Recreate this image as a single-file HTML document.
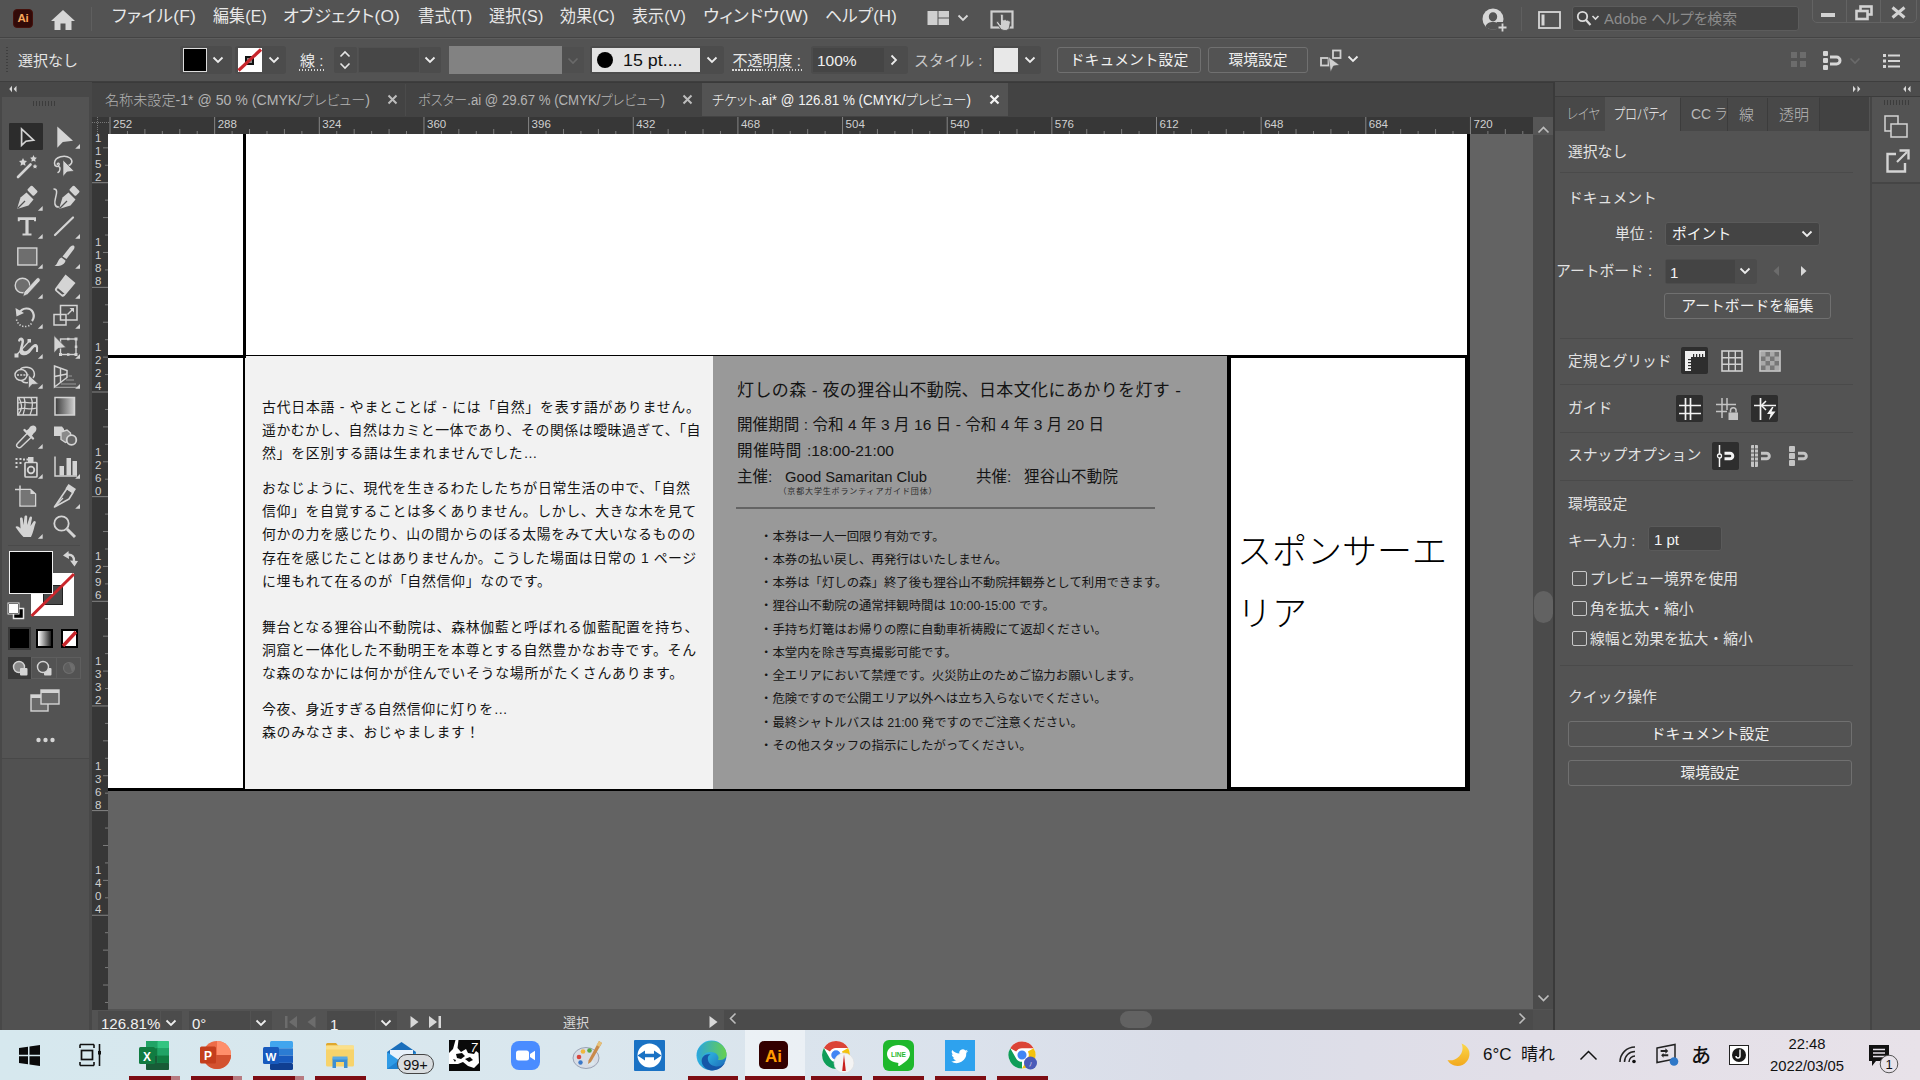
<!DOCTYPE html>
<html lang="ja">
<head>
<meta charset="utf-8">
<title>チケット.ai @ 126.81 % (CMYK/プレビュー)</title>
<style>
*{box-sizing:border-box;margin:0;padding:0}
html,body{width:1920px;height:1080px;overflow:hidden;background:#535353}
body{position:relative;font-family:"Liberation Sans","Noto Sans CJK JP",sans-serif;font-size:15px;color:#e6e6e6;line-height:1}
.p{font-feature-settings:"palt"}
.abs{position:absolute}
.ui{font-family:"Liberation Sans","Noto Sans CJK JP",sans-serif}
.t{position:absolute;white-space:nowrap}
/* bars */
#menubar{position:absolute;left:0;top:0;width:1920px;height:38px;background:#535353;border-bottom:1px solid #444}
#ctrlbar{position:absolute;left:0;top:38px;width:1920px;height:44px;background:#535353;border-top:1px solid #5d5d5d;border-bottom:1px solid #3e3e3e}
#menubar .m{font-feature-settings:"palt";position:absolute;top:7.500px;font-size:17px;color:#e8e8e8;white-space:nowrap;letter-spacing:.2px}
.dd{position:absolute;background:#484848;border-radius:2px}
.chev{position:absolute}
.btn{position:absolute;border:1px solid #707070;border-radius:3px;color:#f0f0f0;text-align:center;white-space:nowrap}
.inp{position:absolute;background:#454545;border:1px solid #4e4e4e;border-radius:2px;color:#f0f0f0}
/* tool panel */
#tools{position:absolute;left:0;top:82px;width:92px;height:948px;background:#484848}
#tools .body{position:absolute;left:2px;top:15px;width:87px;height:661px;background:#535353}
#tools .rest{position:absolute;left:2px;top:677px;width:87px;height:271px;background:#515151}
/* doc area */
#tabbar{position:absolute;left:92px;top:82px;width:1463px;height:35px;background:#434343}
.tab{font-feature-settings:"palt";position:absolute;top:0;height:34px;font-size:14px;color:#b4b4b4;white-space:nowrap;font-weight:300}
#canvas{position:absolute;left:108px;top:134px;width:1425px;height:876px;background:#636363;overflow:hidden}
#vscroll{position:absolute;left:1533px;top:117px;width:21px;height:893px;background:#4b4b4b}
#status{position:absolute;left:92px;top:1010px;width:1463px;height:20px;background:#535353}
/* right panel */
#rpanel{position:absolute;left:1555px;top:82px;width:315px;height:948px;background:#535353}
#rstrip{position:absolute;left:1870px;top:82px;width:50px;height:948px;background:#535353}
.sec{position:absolute;left:13px;font-size:14.800px;color:#e2e2e2;white-space:nowrap}
.hr1{position:absolute;left:5px;width:293px;height:1px;background:#4a4a4a}
#rpanel .sec,#rpanel .t{margin-top:1.200px}
#rpanel .t.p{margin-top:0}
/* taskbar */
#taskbar{position:absolute;left:0;top:1030px;width:1920px;height:50px;background:linear-gradient(90deg,#d6e8ee 0%,#dae7ee 30%,#dbe2ec 50%,#dadde8 62%,#e2dfe8 80%,#e8e2e9 100%);color:#111}
.run{position:absolute;top:46px;height:4px;background:#7d0d13}
.run i{position:absolute;right:0;top:0;width:9px;height:4px;background:#b77a80}
/* art */
.art{position:absolute;color:#141414;font-feature-settings:normal;font-family:"Liberation Sans","Noto Sans CJK JP",sans-serif}
.lt{width:434.500px;font-size:13.900px;line-height:23.200px}
.lt .j{white-space:nowrap;text-align:justify;text-align-last:justify;width:434.500px}
.lt .l{white-space:nowrap;letter-spacing:.5px}
.bl{font-size:12.400px;line-height:23.250px;white-space:nowrap}
</style>
</head>
<body>
<!-- ===== MENU BAR ===== -->
<div id="menubar">
  <div class="abs" style="left:13px;top:9px;width:20px;height:19px;background:#320a08;border-radius:4px;border:1px solid #45110c"></div>
  <div class="t" style="left:17.5px;top:13px;font-size:11.5px;font-weight:bold;color:#f7a75c;letter-spacing:-.2px">Ai</div>
  <svg class="abs" style="left:50px;top:9px" width="26" height="22" viewBox="0 0 26 22"><path d="M13 1 L25 12 H21.5 V21 H15.5 V14.5 H10.5 V21 H4.5 V12 H1 Z" fill="#d6d6d6"/></svg>
  <div class="abs" style="left:91px;top:7px;width:1px;height:24px;background:#5f5f5f"></div>
  <div class="m fit" style="left:111.5px;--tw:84px;transform:scaleX(1.0246);transform-origin:0 50%">ファイル(F)</div>
  <div class="m fit" style="left:212.5px;--tw:54px;transform:scaleX(0.9363);transform-origin:0 50%">編集(E)</div>
  <div class="m fit" style="left:282.5px;--tw:117px;transform:scaleX(1.0101);transform-origin:0 50%">オブジェクト(O)</div>
  <div class="m fit" style="left:418px;--tw:54.5px;transform:scaleX(0.9609);transform-origin:0 50%">書式(T)</div>
  <div class="m fit" style="left:489px;--tw:54.5px;transform:scaleX(0.9450);transform-origin:0 50%">選択(S)</div>
  <div class="m fit" style="left:559.5px;--tw:55px;transform:scaleX(0.9384);transform-origin:0 50%">効果(C)</div>
  <div class="m fit" style="left:631.5px;--tw:54px;transform:scaleX(0.9363);transform-origin:0 50%">表示(V)</div>
  <div class="m fit" style="left:703px;--tw:105.5px;transform:scaleX(1.0415);transform-origin:0 50%">ウィンドウ(W)</div>
  <div class="m fit" style="left:824.5px;--tw:72px;transform:scaleX(0.9786);transform-origin:0 50%">ヘルプ(H)</div>
  <!-- layout icon -->
  <svg class="abs" style="left:927px;top:11px" width="22" height="14" viewBox="0 0 22 14"><rect x="0.500" y="0" width="10" height="14" fill="#cfcfcf"/><rect x="11.500" y="0" width="10.500" height="6.500" fill="#cfcfcf"/><rect x="11.500" y="7.500" width="10.500" height="6.500" fill="#cfcfcf"/></svg>
  <svg class="abs" style="left:957px;top:14px" width="12" height="8" viewBox="0 0 12 8"><path d="M1.5 1.5 L6 6 L10.5 1.5" fill="none" stroke="#d8d8d8" stroke-width="1.8"/></svg>
  <!-- touch workspace icon -->
  <svg class="abs" style="left:990px;top:9px" width="24" height="23" viewBox="0 0 24 23"><rect x="1.5" y="2.5" width="21" height="16" fill="none" stroke="#cfcfcf" stroke-width="2.2"/><path d="M10.5 16 V6.5 a1.4 1.4 0 0 1 2.8 0 V11 l1.2 -.3 a1.2 1.2 0 0 1 1.5 .6 l1 -.2 a1.2 1.2 0 0 1 1.5 .7 l.6 0 a1.3 1.3 0 0 1 1.3 1.5 L19.5 18 C19 20.5 17.5 21.5 15 21.5 C12 21.5 10.5 20 9 17.5 L6.5 14 C6 13 7.5 12 8.5 13 Z" fill="#cfcfcf" stroke="#535353" stroke-width=".9"/></svg>
  <!-- user icon -->
  <svg class="abs" style="left:1482px;top:8px" width="26" height="24" viewBox="0 0 26 24"><circle cx="11" cy="11" r="10.5" fill="#d6d6d6"/><path d="M11 4.2 a4.2 4.6 0 0 1 0 9.2 a4.2 4.6 0 0 1 0 -9.2 Z M3.5 18.5 c1-3.4 4-4.6 7.5-4.6 s6.500 1.200 7.500 4.600 a10.500 10.500 0 0 1 -15 0 Z" fill="#535353"/><rect x="15" y="14" width="11" height="10" fill="#535353"/><path d="M20.5 15.500 V23.500 M16.500 19.500 H24.500" stroke="#d6d6d6" stroke-width="1.800"/></svg>
  <div class="abs" style="left:1521px;top:7px;width:1px;height:24px;background:#5f5f5f"></div>
  <svg class="abs" style="left:1538px;top:11px" width="23" height="18" viewBox="0 0 23 18"><rect x="1" y="1" width="21" height="16" fill="none" stroke="#d6d6d6" stroke-width="1.800"/><rect x="3.500" y="3.500" width="3" height="11" fill="#d6d6d6"/></svg>
  <!-- search -->
  <div class="abs" style="left:1572px;top:6px;width:227px;height:25px;background:#444;border:1px solid #5c5c5c;border-radius:3px"></div>
  <svg class="abs" style="left:1576px;top:10px" width="30" height="18" viewBox="0 0 30 18"><circle cx="6.500" cy="6.500" r="4.700" fill="none" stroke="#dcdcdc" stroke-width="1.800"/><path d="M10 10 L14.500 15" stroke="#dcdcdc" stroke-width="2.200"/><path d="M16.500 6 L19.500 9 L22.500 6" fill="none" stroke="#dcdcdc" stroke-width="1.600"/></svg>
  <div class="t p fit" style="left:1604px;top:11px;font-size:15px;color:#8c8c8c;--tw:133px;transform:scaleX(0.9893);transform-origin:0 50%">Adobe ヘルプを検索</div>
  <!-- window controls -->
  <div class="abs" style="left:1812px;top:-2px;width:105px;height:25px;border:1px solid #636363;border-radius:0 0 5px 5px"></div>
  <div class="abs" style="left:1846px;top:0;width:1px;height:22px;background:#636363"></div>
  <div class="abs" style="left:1880px;top:0;width:1px;height:22px;background:#636363"></div>
  <div class="abs" style="left:1821px;top:13px;width:14px;height:4px;background:#d2d2d2"></div>
  <svg class="abs" style="left:1855px;top:5px" width="19" height="16" viewBox="0 0 19 16"><rect x="5.500" y="1.500" width="11" height="8" fill="none" stroke="#d2d2d2" stroke-width="2.600"/><rect x="1.500" y="6" width="11" height="8" fill="#535353" stroke="#d2d2d2" stroke-width="2.600"/></svg>
  <svg class="abs" style="left:1891px;top:6px" width="15" height="13" viewBox="0 0 15 13"><path d="M1.500 1.500 L13.500 11.500 M13.500 1.500 L1.500 11.500" stroke="#d2d2d2" stroke-width="3"/></svg>
</div>
<!-- ===== CONTROL BAR ===== -->
<div id="ctrlbar"></div>
<div id="ctrl" class="abs" style="left:0;top:0;width:1920px;height:0">
  <!-- grip -->
  <div class="abs" style="left:6px;top:47px;width:2px;height:26px;background:repeating-linear-gradient(180deg,#3f3f3f 0 1px,transparent 1px 3px)"></div>
  <div class="t" style="left:18px;top:52.500px;font-size:15px;color:#e4e4e4">選択なし</div>
  <!-- fill swatch -->
  <div class="abs" style="left:180px;top:46px;width:52px;height:28px;background:#4c4c4c;border-radius:3px"></div>
  <div class="abs" style="left:183px;top:48px;width:24px;height:24px;background:#000;border:1px solid #dcdcdc"></div>
  <svg class="chev" style="left:212px;top:56px" width="12" height="8" viewBox="0 0 12 8"><path d="M1.500 1.500 L6 6 L10.500 1.500" fill="none" stroke="#ececec" stroke-width="1.800"/></svg>
  <!-- stroke swatch -->
  <div class="abs" style="left:235px;top:46px;width:51px;height:28px;background:#4c4c4c;border-radius:3px"></div>
  <div class="abs" style="left:238px;top:48px;width:24px;height:24px;background:#fff"></div>
  <div class="abs" style="left:245px;top:56px;width:9px;height:9px;border:2px solid #111;background:#888"></div>
  <svg class="abs" style="left:236px;top:47px" width="28" height="26" viewBox="0 0 28 26"><path d="M2.500 23.500 L25 2.500" stroke="#c8262c" stroke-width="3.2"/></svg>
  <svg class="chev" style="left:268px;top:56px" width="12" height="8" viewBox="0 0 12 8"><path d="M1.500 1.500 L6 6 L10.500 1.500" fill="none" stroke="#ececec" stroke-width="1.800"/></svg>
  <!-- stroke label -->
  <div class="t" style="left:300px;top:52.500px;font-size:15px;color:#e8e8e8">線 :</div>
  <div class="abs" style="left:299px;top:69px;width:27px;height:2px;background:repeating-linear-gradient(90deg,#d8d8d8 0 1.500px,transparent 1.500px 3px)"></div>
  <!-- spinner -->
  <div class="abs" style="left:334px;top:47px;width:23px;height:26px;background:#4c4c4c;border-radius:2px"></div>
  <svg class="abs" style="left:339px;top:50px" width="12" height="20" viewBox="0 0 12 20"><path d="M1.500 6.500 L6 2 L10.500 6.500 M1.500 13.500 L6 18 L10.500 13.500" fill="none" stroke="#e6e6e6" stroke-width="1.600"/></svg>
  <div class="abs" style="left:358px;top:47px;width:62px;height:26px;background:#474747;border:1px solid #505050"></div>
  <div class="abs" style="left:420px;top:47px;width:21px;height:26px;background:#4c4c4c;border-radius:0 2px 2px 0"></div>
  <svg class="chev" style="left:424px;top:56px" width="12" height="8" viewBox="0 0 12 8"><path d="M1.500 1.500 L6 6 L10.500 1.500" fill="none" stroke="#ececec" stroke-width="1.800"/></svg>
  <!-- profile -->
  <div class="abs" style="left:449px;top:46px;width:113px;height:28px;background:#828282"></div>
  <div class="abs" style="left:562px;top:47px;width:22px;height:26px;background:#4f4f4f"></div>
  <svg class="chev" style="left:567px;top:57px" width="12" height="8" viewBox="0 0 12 8"><path d="M1.500 1.500 L6 6 L10.500 1.500" fill="none" stroke="#6a6a6a" stroke-width="1.600"/></svg>
  <!-- brush -->
  <div class="abs" style="left:590px;top:46px;width:134px;height:28px;background:#4c4c4c;border-radius:3px"></div>
  <div class="abs" style="left:592px;top:48px;width:108px;height:24px;background:#e2e2e2"></div>
  <div class="abs" style="left:597px;top:52px;width:16px;height:16px;border-radius:50%;background:#000"></div>
  <div class="t fit" style="left:623px;top:52px;font-size:17px;color:#111;--tw:59.500px;transform:scaleX(1.0493);transform-origin:0 50%">15 pt....</div>
  <svg class="chev" style="left:706px;top:56px" width="12" height="8" viewBox="0 0 12 8"><path d="M1.500 1.500 L6 6 L10.500 1.500" fill="none" stroke="#ececec" stroke-width="1.800"/></svg>
  <!-- opacity -->
  <div class="t" style="left:732.500px;top:52.500px;font-size:15px;color:#e8e8e8">不透明度 :</div>
  <div class="abs" style="left:732px;top:69px;width:72px;height:2px;background:repeating-linear-gradient(90deg,#d8d8d8 0 1.500px,transparent 1.500px 3px)"></div>
  <div class="abs" style="left:811px;top:46px;width:97px;height:28px;background:#4c4c4c;border-radius:3px"></div>
  <div class="abs" style="left:813px;top:48px;width:71px;height:24px;background:#454545"></div>
  <div class="t" style="left:817px;top:53px;font-size:15.500px;color:#f0f0f0">100%</div>
  <svg class="abs" style="left:890px;top:54px" width="8" height="12" viewBox="0 0 8 12"><path d="M1.500 1.500 L6 6 L1.500 10.500" fill="none" stroke="#ececec" stroke-width="1.800"/></svg>
  <!-- style -->
  <div class="t" style="left:914px;top:52.500px;font-size:15px;color:#c8c8c8">スタイル :</div>
  <div class="abs" style="left:992px;top:46px;width:49px;height:28px;background:#4c4c4c;border-radius:3px"></div>
  <div class="abs" style="left:994px;top:48px;width:24px;height:24px;background:#e8e8e8"></div>
  <svg class="chev" style="left:1024px;top:56px" width="12" height="8" viewBox="0 0 12 8"><path d="M1.500 1.500 L6 6 L10.500 1.500" fill="none" stroke="#ececec" stroke-width="1.800"/></svg>
  <!-- buttons -->
  <div class="btn" style="left:1057px;top:47px;width:144px;height:26px;font-size:14.800px;line-height:25px">ドキュメント設定</div>
  <div class="btn" style="left:1208px;top:47px;width:100px;height:26px;font-size:14.800px;line-height:25px">環境設定</div>
  <!-- select similar icon -->
  <svg class="abs" style="left:1319px;top:49px" width="26" height="24" viewBox="0 0 26 24"><rect x="2" y="9" width="7.500" height="7.500" fill="none" stroke="#d0d0d0" stroke-width="1.800"/><rect x="14" y="1.500" width="7.500" height="7.500" fill="none" stroke="#d0d0d0" stroke-width="1.800"/><path d="M9.500 8 L20.500 16 L14.500 17 L11.500 23 Z" fill="#d0d0d0" stroke="#535353" stroke-width=".6"/></svg>
  <svg class="chev" style="left:1347px;top:55px" width="12" height="8" viewBox="0 0 12 8"><path d="M1.500 1.500 L6 6 L10.500 1.500" fill="none" stroke="#ececec" stroke-width="1.800"/></svg>
  <!-- right icons -->
  <svg class="abs" style="left:1791px;top:52px" width="16" height="16" viewBox="0 0 16 16"><g fill="#6c6c6c"><rect x="0" y="0" width="6" height="6"/><rect x="9" y="0" width="6" height="6"/><rect x="0" y="9" width="6" height="6"/><rect x="9" y="9" width="6" height="6"/></g></svg>
  <svg class="abs" style="left:1822px;top:50px" width="24" height="21" viewBox="0 0 24 21"><g fill="#d6d6d6"><rect x="1" y="1" width="5" height="5" rx="1"/><rect x="1" y="8" width="5" height="5" rx="1"/><rect x="1" y="15" width="5" height="5" rx="1"/></g><path d="M8 7 H14.500 a3.500 3.500 0 0 1 0 7 H8" fill="none" stroke="#d6d6d6" stroke-width="3"/></svg>
  <svg class="chev" style="left:1849px;top:57px" width="12" height="8" viewBox="0 0 12 8"><path d="M1.500 1.500 L6 6 L10.500 1.500" fill="none" stroke="#6a6a6a" stroke-width="1.600"/></svg>
  <svg class="abs" style="left:1883px;top:54px" width="17" height="14" viewBox="0 0 17 14"><g fill="#d6d6d6"><rect x="0" y="0" width="3" height="3"/><rect x="0" y="5.500" width="3" height="3"/><rect x="0" y="11" width="3" height="3"/><rect x="5" y="0.500" width="12" height="2"/><rect x="5" y="6" width="12" height="2"/><rect x="5" y="11.500" width="12" height="2"/></g></svg>
</div>
<!-- ===== TOOLS ===== -->
<div id="tools"><div class="body"></div><div class="rest"></div></div>
<div id="toolicons" class="abs" style="left:0;top:0;width:0;height:0">
<svg class="abs" style="left:8px;top:85px" width="10" height="8" viewBox="0 0 10 8"><path d="M4 .8 L1.200 4 L4 7.200 Z M8.500 .8 L5.700 4 L8.500 7.200 Z" fill="#d8d8d8"/></svg>
<div class="abs" style="left:33px;top:101px;width:24px;height:5px;background:repeating-linear-gradient(90deg,#3c3c3c 0 1px,transparent 1px 3px)"></div>
<div class="abs" style="left:9px;top:123px;width:34px;height:27px;background:#2c2c2c;border-radius:1px"></div>
<svg class="abs" style="left:12px;top:122px;overflow:visible" width="30" height="30" viewBox="0 0 30 30"><path d="M9.600 7 L9.600 23.300 L14 19.200 L21.600 18.200 Z" fill="none" stroke="#d4d4d4" stroke-width="1.700" stroke-linejoin="miter"/></svg>
<svg class="abs" style="left:50px;top:122px;overflow:visible" width="30" height="30" viewBox="0 0 30 30"><path d="M7.300 4.400 L7.300 25.800 L12.800 20 L23 18.800 Z" fill="#d4d4d4"/><path d="M30 22 V26.800 H25.2 Z" fill="#d4d4d4"/></svg>
<svg class="abs" style="left:12px;top:152px;overflow:visible" width="30" height="30" viewBox="0 0 30 30"><path d="M6 25 L18.500 12.500" stroke="#d4d4d4" stroke-width="2.600" stroke-linecap="round"/><path d="M11 5 l1.200 2.600 2.800 .4 -2 2 .5 2.800 -2.500 -1.300 -2.500 1.300 .5 -2.800 -2 -2 2.800 -.4z" fill="#d4d4d4" transform="translate(0,1)"/><path d="M21.500 3 l1 2.300 2.400 .4 -1.700 1.700 .4 2.400 -2.100 -1.100 -2.100 1.100 .4 -2.400 -1.700 -1.700 2.400 -.4z" fill="#d4d4d4"/><path d="M23 12 l.8 1.500 1.600 .3 -1.200 1.100 .3 1.600 -1.500 -.8 -1.500 .8 .3 -1.600 -1.200 -1.100 1.600 -.3z" fill="#d4d4d4"/></svg>
<svg class="abs" style="left:50px;top:152px;overflow:visible" width="30" height="30" viewBox="0 0 30 30"><path d="M17 14 C22 13 23.500 9 20 6 C15 2.500 5 4.500 4.500 11 C4.300 14.500 8 15.500 9 13 C9.800 11 7.500 10.500 7.300 12.300 M8.500 14.500 C11 15 10 19.500 8 20.500" fill="none" stroke="#d4d4d4" stroke-width="1.500" stroke-linecap="round"/><path d="M13 8 L13 24.500 L17 20 L24 19 Z" fill="#d4d4d4" stroke="#535353" stroke-width=".6"/></svg>
<svg class="abs" style="left:12px;top:183.5px;overflow:visible" width="30" height="30" viewBox="0 0 30 30"><path d="M5 25 L8.500 13.500 L14.500 8.500 L21.500 15.500 L16.500 21.500 Z" fill="#d4d4d4"/><path d="M5.500 24.500 L13 17" stroke="#535353" stroke-width="1.200"/><rect x="16" y="3.500" width="9" height="6.500" rx="1.200" transform="rotate(45 20.500 6.750)" fill="#d4d4d4"/><path d="M30.7 22 V26.800 H25.9 Z" fill="#d4d4d4"/></svg>
<svg class="abs" style="left:50px;top:183.5px;overflow:visible" width="30" height="30" viewBox="0 0 30 30"><g transform="translate(4,0)"><path d="M5 25 L8.500 13.500 L14.500 8.500 L21.500 15.500 L16.500 21.500 Z" fill="#d4d4d4"/><path d="M5.500 24.500 L13 17" stroke="#535353" stroke-width="1.200"/><rect x="16" y="3.500" width="9" height="6.500" rx="1.200" transform="rotate(45 20.500 6.750)" fill="#d4d4d4"/></g><path d="M4 5 C8 5 6.500 10 5.500 14 C4.500 18 4 23 8.500 23" fill="none" stroke="#d4d4d4" stroke-width="1.500" stroke-linecap="round"/></svg>
<svg class="abs" style="left:12px;top:212px;overflow:visible" width="30" height="30" viewBox="0 0 30 30"><path d="M5.800 5.300 H24 V9.300 H22 V8 H16.600 V21.500 H19.500 V23.500 H10.500 V21.500 H13.400 V8 H7.800 V9.300 H5.800 Z" fill="#d4d4d4"/><path d="M30.7 22 V26.800 H25.9 Z" fill="#d4d4d4"/></svg>
<svg class="abs" style="left:50px;top:212px;overflow:visible" width="30" height="30" viewBox="0 0 30 30"><path d="M5 23 L23 5.500" stroke="#d4d4d4" stroke-width="2.200" stroke-linecap="round"/><path d="M30 22 V26.800 H25.2 Z" fill="#d4d4d4"/></svg>
<svg class="abs" style="left:12px;top:242px;overflow:visible" width="30" height="30" viewBox="0 0 30 30"><rect x="5.800" y="6" width="19" height="17" fill="#6e6e6e" stroke="#d4d4d4" stroke-width="1.400"/><path d="M30.7 22 V26.800 H25.9 Z" fill="#d4d4d4"/></svg>
<svg class="abs" style="left:50px;top:242px;overflow:visible" width="30" height="30" viewBox="0 0 30 30"><path d="M22.500 3.500 C24.500 3 25 5 24 7 L16.500 17 L12.500 14.500 L20 5 C21 4 21.500 3.800 22.500 3.500 Z" fill="#d4d4d4"/><path d="M11.500 15.500 L15.500 18.500 C15 22 11 24.500 4.500 24 C8 22.500 7.500 17 11.500 15.500 Z" fill="#d4d4d4"/><path d="M30 22 V26.800 H25.2 Z" fill="#d4d4d4"/></svg>
<svg class="abs" style="left:12px;top:272px;overflow:visible" width="30" height="30" viewBox="0 0 30 30"><circle cx="10.500" cy="13.500" r="7.300" fill="#6e6e6e" stroke="#d4d4d4" stroke-width="1.400"/><path d="M27 6 C28.500 7 28.500 8.500 27.500 9.500 L15.500 22.500 L11 24.500 L12 20 L24.500 6.500 C25.300 5.600 26.200 5.500 27 6 Z" fill="#d4d4d4" stroke="#535353" stroke-width=".7"/><path d="M30.7 22 V26.800 H25.9 Z" fill="#d4d4d4"/></svg>
<svg class="abs" style="left:50px;top:272px;overflow:visible" width="30" height="30" viewBox="0 0 30 30"><path d="M15.500 2.500 L25.500 11 L14.500 24 C13.500 25 12.500 25 11.500 24.200 L5.500 19 C4.700 18 4.700 17 5.500 16 Z" fill="#d4d4d4"/><path d="M7.300 16.600 L14 22.300 L11.700 23 L6.300 18.400 Z" fill="#535353" transform="translate(0.500,-0.500)"/><path d="M30 22 V26.800 H25.2 Z" fill="#d4d4d4"/></svg>
<svg class="abs" style="left:12px;top:302px;overflow:visible" width="30" height="30" viewBox="0 0 30 30"><path d="M7 11.500 C10 5 18.500 5 21 10.500 C22.500 14 21.500 17 20 19" fill="none" stroke="#d4d4d4" stroke-width="2.200"/><path d="M3.500 6 L4.500 14.500 L12 11 Z" fill="#d4d4d4"/><path d="M4.500 17.500 C6 23 10 25 14.500 24.500 C17.500 24 19 22.500 20 20.500" fill="none" stroke="#d4d4d4" stroke-width="1.600" stroke-dasharray="1.300 1.700"/><path d="M30.7 22 V26.800 H25.9 Z" fill="#d4d4d4"/></svg>
<svg class="abs" style="left:50px;top:302px;overflow:visible" width="30" height="30" viewBox="0 0 30 30"><rect x="10.500" y="3.500" width="16.500" height="14.500" fill="none" stroke="#d4d4d4" stroke-width="1.500"/><rect x="4" y="12.500" width="12" height="10.500" fill="none" stroke="#d4d4d4" stroke-width="1.500"/><path d="M17.500 12.500 L23 7" stroke="#d4d4d4" stroke-width="1.500"/><path d="M19.500 6 H24 V10.500 Z" fill="#d4d4d4"/><path d="M30 22 V26.800 H25.2 Z" fill="#d4d4d4"/></svg>
<svg class="abs" style="left:12px;top:332px;overflow:visible" width="30" height="30" viewBox="0 0 30 30"><path d="M6 9 C7 4 12 5 12 9 C12 13 9 17 12 19 C16 21 20 11 24 12 C27 13 26 17 26 20 L24 20 C24 17 24.500 15 23 15 C20 16 18 25 10 23 C5 21.500 9 14 9.500 10 C9.700 8 8 8 7.500 10 Z" fill="#d4d4d4"/><path d="M4 23.500 L17 9.500" stroke="#d4d4d4" stroke-width="1.200"/><rect x="2.500" y="21.500" width="4" height="4" fill="#d4d4d4"/><rect x="15.500" y="7" width="3.500" height="3.500" fill="#d4d4d4"/><path d="M30.7 22 V26.800 H25.9 Z" fill="#d4d4d4"/></svg>
<svg class="abs" style="left:50px;top:332px;overflow:visible" width="30" height="30" viewBox="0 0 30 30"><rect x="10.500" y="7" width="15.500" height="15.500" fill="none" stroke="#d4d4d4" stroke-width="1.400"/><g fill="#d4d4d4"><rect x="24.500" y="5.500" width="3" height="3"/><rect x="24.500" y="21" width="3" height="3"/><rect x="9" y="21" width="3" height="3"/><rect x="17" y="5.800" width="2.500" height="2.500"/><rect x="17" y="21.300" width="2.500" height="2.500"/><rect x="24.800" y="13.500" width="2.500" height="2.500"/></g><path d="M4 3.500 L4 21 L8 16.500 L16 15.500 Z" fill="#d4d4d4" stroke="#535353" stroke-width=".7"/><path d="M30 22 V26.800 H25.2 Z" fill="#d4d4d4"/></svg>
<svg class="abs" style="left:12px;top:362px;overflow:visible" width="30" height="30" viewBox="0 0 30 30"><ellipse cx="9" cy="13" rx="6" ry="5.500" fill="none" stroke="#d4d4d4" stroke-width="1.400"/><path d="M8 8 C10 4 20 4 22 10 C23 13 22 15 21 16 M9.500 18.500 C11 20.500 14 21 16 20.500" fill="none" stroke="#d4d4d4" stroke-width="1.400"/><path d="M5 13 H17" stroke="#d4d4d4" stroke-width="1.400" stroke-dasharray="2 1.200"/><path d="M16.500 13 L16.500 26.500 L20 22.500 L26.500 22 Z" fill="#d4d4d4" stroke="#535353" stroke-width=".6"/><path d="M30.7 22 V26.800 H25.9 Z" fill="#d4d4d4"/></svg>
<svg class="abs" style="left:50px;top:362px;overflow:visible" width="30" height="30" viewBox="0 0 30 30"><path d="M4.500 4 L17 8.500 V15.500 L4.500 25 Z" fill="none" stroke="#d4d4d4" stroke-width="1.500"/><path d="M4.500 14.500 L17 12 M10.500 6 V20.500" stroke="#d4d4d4" stroke-width="1.400"/><path d="M18.500 14 H22 M16 18 H24 M11 22 H26 M5 25.300 H27.500" stroke="#9a9a9a" stroke-width="1.200"/><path d="M30 22 V26.800 H25.2 Z" fill="#d4d4d4"/></svg>
<svg class="abs" style="left:12px;top:392px;overflow:visible" width="30" height="30" viewBox="0 0 30 30"><rect x="5.800" y="5.500" width="19" height="17.500" fill="none" stroke="#d4d4d4" stroke-width="1.500"/><path d="M6 11 C12 9 18 12 24.500 10.500 M6 17.500 C12 14.500 17 18.500 24.500 16 M12 5.500 C14 11 13 17 11 23 M19 5.500 C21.500 11 20.500 17 18 23 M6 23 C10 18 11 14 7 6" fill="none" stroke="#d4d4d4" stroke-width="1.300"/></svg>
<svg class="abs" style="left:50px;top:392px;overflow:visible" width="30" height="30" viewBox="0 0 30 30"><defs><linearGradient id="gt" x1="0" x2="1"><stop offset="0" stop-color="#3a3a3a"/><stop offset="1" stop-color="#cfcfcf"/></linearGradient></defs><rect x="5" y="5.500" width="19.500" height="17.500" fill="url(#gt)" stroke="#d4d4d4" stroke-width="1.500"/></svg>
<svg class="abs" style="left:12px;top:422px;overflow:visible" width="30" height="30" viewBox="0 0 30 30"><path d="M5.500 25 C4 24 4.500 22.500 5.500 21.500 L15.500 11 L19.500 15 L9 25 C8 26 6.500 26 5.500 25 Z" fill="none" stroke="#d4d4d4" stroke-width="1.500"/><path d="M14 9 L17 6.500 C18 4 21.500 2.500 23.500 4.500 C25.500 6.500 24 10 21.500 11.500 L19.500 14.500 Z" fill="#d4d4d4"/><path d="M12.500 8 L21 16.500" stroke="#d4d4d4" stroke-width="2.400" stroke-linecap="round"/><path d="M30.7 22 V26.800 H25.9 Z" fill="#d4d4d4"/></svg>
<svg class="abs" style="left:50px;top:422px;overflow:visible" width="30" height="30" viewBox="0 0 30 30"><path d="M4 4.500 H12 L14 7 V14 H4 Z" fill="#d4d4d4"/><path d="M11 10 L17 8 L20.500 11 V18.500 L15.500 20.500 L11 17.500 Z" fill="#8a8a8a" stroke="#d4d4d4" stroke-width="1.400"/><circle cx="21.500" cy="18" r="4.800" fill="#666" stroke="#d4d4d4" stroke-width="1.800"/></svg>
<svg class="abs" style="left:12px;top:452px;overflow:visible" width="30" height="30" viewBox="0 0 30 30"><rect x="13" y="10.500" width="12" height="14.500" rx="1" fill="none" stroke="#d4d4d4" stroke-width="1.700"/><rect x="16" y="5" width="5.500" height="5" fill="#d4d4d4"/><rect x="14.500" y="6.500" width="3" height="2" fill="#d4d4d4"/><circle cx="19" cy="18" r="3.300" fill="none" stroke="#d4d4d4" stroke-width="1.800"/><g fill="#d4d4d4"><rect x="3.500" y="6" width="2" height="2"/><rect x="7.500" y="6" width="2" height="2"/><rect x="11" y="6.500" width="2" height="2"/><rect x="3.500" y="10" width="2" height="2"/><rect x="7.500" y="10" width="2" height="2"/><rect x="3.500" y="14" width="2" height="2"/></g><path d="M30.7 22 V26.800 H25.9 Z" fill="#d4d4d4"/></svg>
<svg class="abs" style="left:50px;top:452px;overflow:visible" width="30" height="30" viewBox="0 0 30 30"><path d="M5 4.500 V24 H27" fill="none" stroke="#d4d4d4" stroke-width="1.500"/><rect x="9.500" y="14" width="4.500" height="9.500" fill="#d4d4d4"/><rect x="16.500" y="6" width="4.500" height="17.500" fill="#d4d4d4"/><rect x="22.500" y="9" width="4.500" height="14.500" fill="#d4d4d4"/><path d="M30 22 V26.800 H25.2 Z" fill="#d4d4d4"/></svg>
<svg class="abs" style="left:12px;top:482px;overflow:visible" width="30" height="30" viewBox="0 0 30 30"><path d="M8 3.500 V24 H23.500 V12 L18.500 7.500 H3" fill="none" stroke="#d4d4d4" stroke-width="1.500"/><path d="M8.800 8.300 H18 L22.800 12.500 V23.200 H8.800 Z" fill="#757575"/><path d="M18.500 7.500 V12 H23.500 Z" fill="#d4d4d4"/></svg>
<svg class="abs" style="left:50px;top:482px;overflow:visible" width="30" height="30" viewBox="0 0 30 30"><path d="M4.500 25 L17 6.500 L23 10.500 L19 17 Z" fill="none" stroke="#d4d4d4" stroke-width="1.600" stroke-linejoin="round"/><path d="M5 24.500 L13 16" stroke="#d4d4d4" stroke-width="1.200"/><path d="M18.500 2 L26 7 L23 11.500 L15.500 6.500 Z" fill="#d4d4d4"/><path d="M30 22 V26.800 H25.2 Z" fill="#d4d4d4"/></svg>
<svg class="abs" style="left:12px;top:512px;overflow:visible" width="30" height="30" viewBox="0 0 30 30"><path d="M11.500 25 C8 22 6 18 3.500 15 C4.500 13.500 6.500 14 8.500 16.500 L8 6.500 C8 5 10.500 5 10.700 6.500 L11.500 13 L12.500 4.500 C12.700 3 15.200 3 15.200 4.500 L15 13 L17.500 5.500 C18 4 20.300 4.500 20 6 L18.500 14 L21.500 9.500 C22.300 8.300 24.300 9.300 23.700 10.700 C22 15 21.500 20 19 25 Z" fill="#d4d4d4"/><path d="M30.7 22 V26.800 H25.9 Z" fill="#d4d4d4"/></svg>
<svg class="abs" style="left:50px;top:512px;overflow:visible" width="30" height="30" viewBox="0 0 30 30"><circle cx="11.500" cy="11.500" r="7.200" fill="none" stroke="#d4d4d4" stroke-width="1.800"/><path d="M17 17 L25 25" stroke="#d4d4d4" stroke-width="3" stroke-linecap="butt"/></svg>
<div class="abs" style="left:8px;top:545px;width:72px;height:1px;background:#4a4a4a"></div>
<div class="abs" style="left:31px;top:573px;width:43px;height:43px;background:#fff"></div>
<div class="abs" style="left:43px;top:585px;width:20px;height:20px;background:#4a4a4a;border:1.500px solid #222"></div>
<svg class="abs" style="left:29px;top:571px" width="48" height="48" viewBox="0 0 48 48"><path d="M2.500 45 L45 3" stroke="#c9252b" stroke-width="3"/></svg>
<div class="abs" style="left:9px;top:551px;width:44px;height:43px;background:#000;border:1.500px solid #f0f0f0"></div>
<svg class="abs" style="left:61px;top:550px" width="20" height="18" viewBox="0 0 20 18"><path d="M6 5 C11 4 13.500 7 13 11.500" fill="none" stroke="#d4d4d4" stroke-width="2.400"/><path d="M7.500 1 L2 5.500 L8 9 Z M9 10.500 L17 11 L13.500 16.500 Z" fill="#d4d4d4"/></svg>
<svg class="abs" style="left:7px;top:602px" width="18" height="18" viewBox="0 0 18 18"><rect x="6.500" y="6.500" width="10" height="10" fill="#000" stroke="#e8e8e8" stroke-width="1.500"/><rect x="1.500" y="1.500" width="10" height="10" fill="#fff" stroke="#000" stroke-width="1"/><rect x="1" y="1" width="11" height="11" fill="none" stroke="#e8e8e8" stroke-width="1"/></svg>
<div class="abs" style="left:8px;top:627px;width:23px;height:23px;background:#3a3a3a"></div>
<div class="abs" style="left:10px;top:629px;width:19px;height:19px;background:#000"></div>
<div class="abs" style="left:36px;top:629px;width:17px;height:19px;background:linear-gradient(90deg,#fff,#222);border:2px solid #000;box-sizing:content-box;width:13px;height:15px"></div>
<div class="abs" style="left:61px;top:629px;width:13px;height:15px;background:#fff;border:2px solid #000;box-sizing:content-box"></div>
<svg class="abs" style="left:61px;top:629px" width="17" height="19" viewBox="0 0 17 19"><path d="M2 17 L15 3" stroke="#c9252b" stroke-width="3.400"/></svg>
<div class="abs" style="left:8px;top:657px;width:73px;height:22px;border:1px solid #5e5e5e"></div>
<div class="abs" style="left:8px;top:657px;width:23px;height:22px;background:#3a3a3a"></div>
<div class="abs" style="left:31px;top:657px;width:1px;height:22px;background:#5e5e5e"></div><div class="abs" style="left:56px;top:657px;width:1px;height:22px;background:#5e5e5e"></div>
<svg class="abs" style="left:12px;top:660px" width="18" height="18" viewBox="0 0 18 18"><circle cx="7" cy="7" r="5.500" fill="#8a8a8a" stroke="#d4d4d4" stroke-width="1.400"/><rect x="8" y="8" width="7.500" height="7.500" rx="1" fill="#d4d4d4"/></svg>
<svg class="abs" style="left:36px;top:660px" width="18" height="18" viewBox="0 0 18 18"><rect x="8" y="8" width="7.500" height="7.500" rx="1" fill="#d4d4d4"/><circle cx="7" cy="7" r="5.500" fill="#535353" stroke="#d4d4d4" stroke-width="1.400"/></svg>
<svg class="abs" style="left:61px;top:660px" width="18" height="18" viewBox="0 0 18 18"><circle cx="8" cy="8" r="5.500" fill="#5e5e5e" stroke="#6e6e6e" stroke-width="1.200"/><path d="M8 3 a5 5 0 0 1 3 9 Z" fill="#6e6e6e"/></svg>
<svg class="abs" style="left:30px;top:689px" width="30" height="23" viewBox="0 0 30 23"><rect x="1" y="6" width="17" height="16" fill="#6a6a6a" stroke="#d4d4d4" stroke-width="1.400"/><rect x="1" y="6" width="17" height="3" fill="#d4d4d4"/><rect x="11" y="1" width="18" height="14" fill="#6a6a6a" stroke="#d4d4d4" stroke-width="1.400"/><rect x="11" y="1" width="18" height="3" fill="#d4d4d4"/></svg>
<svg class="abs" style="left:36px;top:737px" width="19" height="6" viewBox="0 0 19 6"><circle cx="2.500" cy="3" r="2.200" fill="#d4d4d4"/><circle cx="9.500" cy="3" r="2.200" fill="#d4d4d4"/><circle cx="16.500" cy="3" r="2.200" fill="#d4d4d4"/></svg>
</div>
<!-- ===== DOCUMENT AREA ===== -->
<div id="tabbar">
  <div class="abs" style="left:0;top:0;width:1463px;height:1px;background:#3a3a3a"></div>
  <div class="tab" style="left:13px;width:300px"><span class="t fit" style="left:0;top:11px;--tw:265px;transform:scaleX(1.0075);transform-origin:0 50%">名称未設定-1* @ 50 % (CMYK/プレビュー)</span></div>
  <div class="abs" style="left:313px;top:2px;width:1px;height:32px;background:#4b4b4b"></div>
  <div class="tab" style="left:326px;width:280px"><span class="t fit" style="left:0;top:11px;--tw:247px;transform:scaleX(0.9446);transform-origin:0 50%">ポスター.ai @ 29.67 % (CMYK/プレビュー)</span></div>
  <div class="abs" style="left:610px;top:1px;width:306px;height:33px;background:#535353"></div>
  <div class="tab" style="left:620px;width:290px;color:#f2f2f2"><span class="t fit" style="left:0;top:11px;--tw:259px;transform:scaleX(0.9582);transform-origin:0 50%">チケット.ai* @ 126.81 % (CMYK/プレビュー)</span></div>
  <svg class="abs" style="left:295px;top:12px" width="11" height="11" viewBox="0 0 11 11"><path d="M1.500 1.500 L9.500 9.500 M9.500 1.500 L1.500 9.500" stroke="#bdbdbd" stroke-width="2"/></svg>
  <svg class="abs" style="left:590px;top:12px" width="11" height="11" viewBox="0 0 11 11"><path d="M1.500 1.500 L9.500 9.500 M9.500 1.500 L1.500 9.500" stroke="#bdbdbd" stroke-width="2"/></svg>
  <svg class="abs" style="left:897px;top:12px" width="11" height="11" viewBox="0 0 11 11"><path d="M1.500 1.500 L9.500 9.500 M9.500 1.500 L1.500 9.500" stroke="#f4f4f4" stroke-width="2.200"/></svg>
</div>
<svg class="hr" width="1441" height="17" viewBox="0 0 1441 17" style="position:absolute;left:92px;top:117px">
<rect width="1441" height="17" fill="#373737"/>
<rect x="17.50" y="0" width="1" height="17" fill="#858585"/>
<rect x="34.94" y="14" width="1" height="3" fill="#7c7c7c"/>
<rect x="52.38" y="12" width="1" height="5" fill="#7c7c7c"/>
<rect x="69.83" y="14" width="1" height="3" fill="#7c7c7c"/>
<rect x="87.27" y="12" width="1" height="5" fill="#7c7c7c"/>
<rect x="104.71" y="14" width="1" height="3" fill="#7c7c7c"/>
<rect x="122.15" y="0" width="1" height="17" fill="#858585"/>
<rect x="139.59" y="14" width="1" height="3" fill="#7c7c7c"/>
<rect x="157.03" y="12" width="1" height="5" fill="#7c7c7c"/>
<rect x="174.48" y="14" width="1" height="3" fill="#7c7c7c"/>
<rect x="191.92" y="12" width="1" height="5" fill="#7c7c7c"/>
<rect x="209.36" y="14" width="1" height="3" fill="#7c7c7c"/>
<rect x="226.80" y="0" width="1" height="17" fill="#858585"/>
<rect x="244.24" y="14" width="1" height="3" fill="#7c7c7c"/>
<rect x="261.68" y="12" width="1" height="5" fill="#7c7c7c"/>
<rect x="279.12" y="14" width="1" height="3" fill="#7c7c7c"/>
<rect x="296.57" y="12" width="1" height="5" fill="#7c7c7c"/>
<rect x="314.01" y="14" width="1" height="3" fill="#7c7c7c"/>
<rect x="331.45" y="0" width="1" height="17" fill="#858585"/>
<rect x="348.89" y="14" width="1" height="3" fill="#7c7c7c"/>
<rect x="366.33" y="12" width="1" height="5" fill="#7c7c7c"/>
<rect x="383.78" y="14" width="1" height="3" fill="#7c7c7c"/>
<rect x="401.22" y="12" width="1" height="5" fill="#7c7c7c"/>
<rect x="418.66" y="14" width="1" height="3" fill="#7c7c7c"/>
<rect x="436.10" y="0" width="1" height="17" fill="#858585"/>
<rect x="453.54" y="14" width="1" height="3" fill="#7c7c7c"/>
<rect x="470.98" y="12" width="1" height="5" fill="#7c7c7c"/>
<rect x="488.43" y="14" width="1" height="3" fill="#7c7c7c"/>
<rect x="505.87" y="12" width="1" height="5" fill="#7c7c7c"/>
<rect x="523.31" y="14" width="1" height="3" fill="#7c7c7c"/>
<rect x="540.75" y="0" width="1" height="17" fill="#858585"/>
<rect x="558.19" y="14" width="1" height="3" fill="#7c7c7c"/>
<rect x="575.63" y="12" width="1" height="5" fill="#7c7c7c"/>
<rect x="593.08" y="14" width="1" height="3" fill="#7c7c7c"/>
<rect x="610.52" y="12" width="1" height="5" fill="#7c7c7c"/>
<rect x="627.96" y="14" width="1" height="3" fill="#7c7c7c"/>
<rect x="645.40" y="0" width="1" height="17" fill="#858585"/>
<rect x="662.84" y="14" width="1" height="3" fill="#7c7c7c"/>
<rect x="680.28" y="12" width="1" height="5" fill="#7c7c7c"/>
<rect x="697.73" y="14" width="1" height="3" fill="#7c7c7c"/>
<rect x="715.17" y="12" width="1" height="5" fill="#7c7c7c"/>
<rect x="732.61" y="14" width="1" height="3" fill="#7c7c7c"/>
<rect x="750.05" y="0" width="1" height="17" fill="#858585"/>
<rect x="767.49" y="14" width="1" height="3" fill="#7c7c7c"/>
<rect x="784.93" y="12" width="1" height="5" fill="#7c7c7c"/>
<rect x="802.38" y="14" width="1" height="3" fill="#7c7c7c"/>
<rect x="819.82" y="12" width="1" height="5" fill="#7c7c7c"/>
<rect x="837.26" y="14" width="1" height="3" fill="#7c7c7c"/>
<rect x="854.70" y="0" width="1" height="17" fill="#858585"/>
<rect x="872.14" y="14" width="1" height="3" fill="#7c7c7c"/>
<rect x="889.58" y="12" width="1" height="5" fill="#7c7c7c"/>
<rect x="907.03" y="14" width="1" height="3" fill="#7c7c7c"/>
<rect x="924.47" y="12" width="1" height="5" fill="#7c7c7c"/>
<rect x="941.91" y="14" width="1" height="3" fill="#7c7c7c"/>
<rect x="959.35" y="0" width="1" height="17" fill="#858585"/>
<rect x="976.79" y="14" width="1" height="3" fill="#7c7c7c"/>
<rect x="994.23" y="12" width="1" height="5" fill="#7c7c7c"/>
<rect x="1011.67" y="14" width="1" height="3" fill="#7c7c7c"/>
<rect x="1029.12" y="12" width="1" height="5" fill="#7c7c7c"/>
<rect x="1046.56" y="14" width="1" height="3" fill="#7c7c7c"/>
<rect x="1064.00" y="0" width="1" height="17" fill="#858585"/>
<rect x="1081.44" y="14" width="1" height="3" fill="#7c7c7c"/>
<rect x="1098.88" y="12" width="1" height="5" fill="#7c7c7c"/>
<rect x="1116.33" y="14" width="1" height="3" fill="#7c7c7c"/>
<rect x="1133.77" y="12" width="1" height="5" fill="#7c7c7c"/>
<rect x="1151.21" y="14" width="1" height="3" fill="#7c7c7c"/>
<rect x="1168.65" y="0" width="1" height="17" fill="#858585"/>
<rect x="1186.09" y="14" width="1" height="3" fill="#7c7c7c"/>
<rect x="1203.53" y="12" width="1" height="5" fill="#7c7c7c"/>
<rect x="1220.98" y="14" width="1" height="3" fill="#7c7c7c"/>
<rect x="1238.42" y="12" width="1" height="5" fill="#7c7c7c"/>
<rect x="1255.86" y="14" width="1" height="3" fill="#7c7c7c"/>
<rect x="1273.30" y="0" width="1" height="17" fill="#858585"/>
<rect x="1290.74" y="14" width="1" height="3" fill="#7c7c7c"/>
<rect x="1308.18" y="12" width="1" height="5" fill="#7c7c7c"/>
<rect x="1325.63" y="14" width="1" height="3" fill="#7c7c7c"/>
<rect x="1343.07" y="12" width="1" height="5" fill="#7c7c7c"/>
<rect x="1360.51" y="14" width="1" height="3" fill="#7c7c7c"/>
<rect x="1377.95" y="0" width="1" height="17" fill="#858585"/>
<rect x="1395.39" y="14" width="1" height="3" fill="#7c7c7c"/>
<rect x="1412.83" y="12" width="1" height="5" fill="#7c7c7c"/>
<rect x="1430.28" y="14" width="1" height="3" fill="#7c7c7c"/>
<text x="21.0" y="11.3" font-size="11.5" fill="#d0d0d0" font-family="Liberation Sans, sans-serif">252</text>
<text x="125.7" y="11.3" font-size="11.5" fill="#d0d0d0" font-family="Liberation Sans, sans-serif">288</text>
<text x="230.3" y="11.3" font-size="11.5" fill="#d0d0d0" font-family="Liberation Sans, sans-serif">324</text>
<text x="335.0" y="11.3" font-size="11.5" fill="#d0d0d0" font-family="Liberation Sans, sans-serif">360</text>
<text x="439.6" y="11.3" font-size="11.5" fill="#d0d0d0" font-family="Liberation Sans, sans-serif">396</text>
<text x="544.2" y="11.3" font-size="11.5" fill="#d0d0d0" font-family="Liberation Sans, sans-serif">432</text>
<text x="648.9" y="11.3" font-size="11.5" fill="#d0d0d0" font-family="Liberation Sans, sans-serif">468</text>
<text x="753.6" y="11.3" font-size="11.5" fill="#d0d0d0" font-family="Liberation Sans, sans-serif">504</text>
<text x="858.2" y="11.3" font-size="11.5" fill="#d0d0d0" font-family="Liberation Sans, sans-serif">540</text>
<text x="962.8" y="11.3" font-size="11.5" fill="#d0d0d0" font-family="Liberation Sans, sans-serif">576</text>
<text x="1067.5" y="11.3" font-size="11.5" fill="#d0d0d0" font-family="Liberation Sans, sans-serif">612</text>
<text x="1172.2" y="11.3" font-size="11.5" fill="#d0d0d0" font-family="Liberation Sans, sans-serif">648</text>
<text x="1276.8" y="11.3" font-size="11.5" fill="#d0d0d0" font-family="Liberation Sans, sans-serif">684</text>
<text x="1381.5" y="11.3" font-size="11.5" fill="#d0d0d0" font-family="Liberation Sans, sans-serif">720</text>
</svg>
<svg class="vr" width="16" height="876" viewBox="0 0 16 876" style="position:absolute;left:92px;top:134px">
<rect width="16" height="876" fill="#373737"/>
<rect x="11" y="13.32" width="5" height="1" fill="#7c7c7c"/>
<rect x="13" y="30.76" width="3" height="1" fill="#7c7c7c"/>
<rect x="0" y="48.20" width="16" height="1" fill="#858585"/>
<rect x="13" y="65.64" width="3" height="1" fill="#7c7c7c"/>
<rect x="11" y="83.08" width="5" height="1" fill="#7c7c7c"/>
<rect x="13" y="100.53" width="3" height="1" fill="#7c7c7c"/>
<rect x="11" y="117.97" width="5" height="1" fill="#7c7c7c"/>
<rect x="13" y="135.41" width="3" height="1" fill="#7c7c7c"/>
<rect x="0" y="152.85" width="16" height="1" fill="#858585"/>
<rect x="13" y="170.29" width="3" height="1" fill="#7c7c7c"/>
<rect x="11" y="187.73" width="5" height="1" fill="#7c7c7c"/>
<rect x="13" y="205.18" width="3" height="1" fill="#7c7c7c"/>
<rect x="11" y="222.62" width="5" height="1" fill="#7c7c7c"/>
<rect x="13" y="240.06" width="3" height="1" fill="#7c7c7c"/>
<rect x="0" y="257.50" width="16" height="1" fill="#858585"/>
<rect x="13" y="274.94" width="3" height="1" fill="#7c7c7c"/>
<rect x="11" y="292.38" width="5" height="1" fill="#7c7c7c"/>
<rect x="13" y="309.82" width="3" height="1" fill="#7c7c7c"/>
<rect x="11" y="327.27" width="5" height="1" fill="#7c7c7c"/>
<rect x="13" y="344.71" width="3" height="1" fill="#7c7c7c"/>
<rect x="0" y="362.15" width="16" height="1" fill="#858585"/>
<rect x="13" y="379.59" width="3" height="1" fill="#7c7c7c"/>
<rect x="11" y="397.03" width="5" height="1" fill="#7c7c7c"/>
<rect x="13" y="414.48" width="3" height="1" fill="#7c7c7c"/>
<rect x="11" y="431.92" width="5" height="1" fill="#7c7c7c"/>
<rect x="13" y="449.36" width="3" height="1" fill="#7c7c7c"/>
<rect x="0" y="466.80" width="16" height="1" fill="#858585"/>
<rect x="13" y="484.24" width="3" height="1" fill="#7c7c7c"/>
<rect x="11" y="501.68" width="5" height="1" fill="#7c7c7c"/>
<rect x="13" y="519.12" width="3" height="1" fill="#7c7c7c"/>
<rect x="11" y="536.57" width="5" height="1" fill="#7c7c7c"/>
<rect x="13" y="554.01" width="3" height="1" fill="#7c7c7c"/>
<rect x="0" y="571.45" width="16" height="1" fill="#858585"/>
<rect x="13" y="588.89" width="3" height="1" fill="#7c7c7c"/>
<rect x="11" y="606.33" width="5" height="1" fill="#7c7c7c"/>
<rect x="13" y="623.78" width="3" height="1" fill="#7c7c7c"/>
<rect x="11" y="641.22" width="5" height="1" fill="#7c7c7c"/>
<rect x="13" y="658.66" width="3" height="1" fill="#7c7c7c"/>
<rect x="0" y="676.10" width="16" height="1" fill="#858585"/>
<rect x="13" y="693.54" width="3" height="1" fill="#7c7c7c"/>
<rect x="11" y="710.98" width="5" height="1" fill="#7c7c7c"/>
<rect x="13" y="728.43" width="3" height="1" fill="#7c7c7c"/>
<rect x="11" y="745.87" width="5" height="1" fill="#7c7c7c"/>
<rect x="13" y="763.31" width="3" height="1" fill="#7c7c7c"/>
<rect x="0" y="780.75" width="16" height="1" fill="#858585"/>
<rect x="13" y="798.19" width="3" height="1" fill="#7c7c7c"/>
<rect x="11" y="815.63" width="5" height="1" fill="#7c7c7c"/>
<rect x="13" y="833.08" width="3" height="1" fill="#7c7c7c"/>
<rect x="11" y="850.52" width="5" height="1" fill="#7c7c7c"/>
<rect x="13" y="867.96" width="3" height="1" fill="#7c7c7c"/>
<text x="3" y="7.7" font-size="11.5" fill="#d0d0d0" font-family="Liberation Sans, sans-serif">1</text>
<text x="3" y="20.7" font-size="11.5" fill="#d0d0d0" font-family="Liberation Sans, sans-serif">1</text>
<text x="3" y="33.7" font-size="11.5" fill="#d0d0d0" font-family="Liberation Sans, sans-serif">5</text>
<text x="3" y="46.7" font-size="11.5" fill="#d0d0d0" font-family="Liberation Sans, sans-serif">2</text>
<text x="3" y="112.4" font-size="11.5" fill="#d0d0d0" font-family="Liberation Sans, sans-serif">1</text>
<text x="3" y="125.4" font-size="11.5" fill="#d0d0d0" font-family="Liberation Sans, sans-serif">1</text>
<text x="3" y="138.4" font-size="11.5" fill="#d0d0d0" font-family="Liberation Sans, sans-serif">8</text>
<text x="3" y="151.4" font-size="11.5" fill="#d0d0d0" font-family="Liberation Sans, sans-serif">8</text>
<text x="3" y="217.0" font-size="11.5" fill="#d0d0d0" font-family="Liberation Sans, sans-serif">1</text>
<text x="3" y="230.0" font-size="11.5" fill="#d0d0d0" font-family="Liberation Sans, sans-serif">2</text>
<text x="3" y="243.0" font-size="11.5" fill="#d0d0d0" font-family="Liberation Sans, sans-serif">2</text>
<text x="3" y="256.0" font-size="11.5" fill="#d0d0d0" font-family="Liberation Sans, sans-serif">4</text>
<text x="3" y="321.7" font-size="11.5" fill="#d0d0d0" font-family="Liberation Sans, sans-serif">1</text>
<text x="3" y="334.7" font-size="11.5" fill="#d0d0d0" font-family="Liberation Sans, sans-serif">2</text>
<text x="3" y="347.7" font-size="11.5" fill="#d0d0d0" font-family="Liberation Sans, sans-serif">6</text>
<text x="3" y="360.7" font-size="11.5" fill="#d0d0d0" font-family="Liberation Sans, sans-serif">0</text>
<text x="3" y="426.3" font-size="11.5" fill="#d0d0d0" font-family="Liberation Sans, sans-serif">1</text>
<text x="3" y="439.3" font-size="11.5" fill="#d0d0d0" font-family="Liberation Sans, sans-serif">2</text>
<text x="3" y="452.3" font-size="11.5" fill="#d0d0d0" font-family="Liberation Sans, sans-serif">9</text>
<text x="3" y="465.3" font-size="11.5" fill="#d0d0d0" font-family="Liberation Sans, sans-serif">6</text>
<text x="3" y="531.0" font-size="11.5" fill="#d0d0d0" font-family="Liberation Sans, sans-serif">1</text>
<text x="3" y="544.0" font-size="11.5" fill="#d0d0d0" font-family="Liberation Sans, sans-serif">3</text>
<text x="3" y="557.0" font-size="11.5" fill="#d0d0d0" font-family="Liberation Sans, sans-serif">3</text>
<text x="3" y="570.0" font-size="11.5" fill="#d0d0d0" font-family="Liberation Sans, sans-serif">2</text>
<text x="3" y="635.6" font-size="11.5" fill="#d0d0d0" font-family="Liberation Sans, sans-serif">1</text>
<text x="3" y="648.6" font-size="11.5" fill="#d0d0d0" font-family="Liberation Sans, sans-serif">3</text>
<text x="3" y="661.6" font-size="11.5" fill="#d0d0d0" font-family="Liberation Sans, sans-serif">6</text>
<text x="3" y="674.6" font-size="11.5" fill="#d0d0d0" font-family="Liberation Sans, sans-serif">8</text>
<text x="3" y="740.2" font-size="11.5" fill="#d0d0d0" font-family="Liberation Sans, sans-serif">1</text>
<text x="3" y="753.2" font-size="11.5" fill="#d0d0d0" font-family="Liberation Sans, sans-serif">4</text>
<text x="3" y="766.2" font-size="11.5" fill="#d0d0d0" font-family="Liberation Sans, sans-serif">0</text>
<text x="3" y="779.2" font-size="11.5" fill="#d0d0d0" font-family="Liberation Sans, sans-serif">4</text>
</svg>
<!-- ruler origin box -->
<div class="abs" style="left:92px;top:117px;width:17px;height:17px;background:#373737"></div>
<svg class="abs" style="left:92px;top:117px" width="17" height="17" viewBox="0 0 17 17"><path d="M0 5.500 H17 M5.500 0 V17" stroke="#777" stroke-width="1" stroke-dasharray="1 1"/></svg>
<div id="vscroll">
  <div class="abs" style="left:0;top:0;width:21px;height:18px;background:#565656"></div>
  <svg class="abs" style="left:4px;top:8.500px" width="13" height="8" viewBox="0 0 13 8"><path d="M1.500 6.500 L6.500 1.500 L11.500 6.500" fill="none" stroke="#bdbdbd" stroke-width="1.700"/></svg>
  <div class="abs" style="left:1px;top:474px;width:19px;height:32px;border-radius:9.500px;background:#626262"></div>
  <svg class="abs" style="left:4px;top:877px" width="13" height="8" viewBox="0 0 13 8"><path d="M1.500 1.500 L6.500 6.500 L11.500 1.500" fill="none" stroke="#bdbdbd" stroke-width="1.700"/></svg>
</div>
<div id="canvas"><div class="abs" style="left:-108px;top:-134px;width:1920px;height:1080px">
  <!-- white boxes -->
  <div class="abs" style="left:108px;top:134px;width:136px;height:222px;background:#fff"></div>
  <div class="abs" style="left:246px;top:134px;width:1221px;height:222px;background:#fff"></div>
  <div class="abs" style="left:108px;top:358px;width:136px;height:430px;background:#fff"></div>
  <div class="abs" style="left:245px;top:356px;width:468px;height:433px;background:#f2f2f2"></div>
  <div class="abs" style="left:713px;top:356px;width:514px;height:433px;background:#999"></div>
  <div class="abs" style="left:1230px;top:358px;width:236px;height:430px;background:#fff"></div>
  <!-- black lines -->
  <div class="abs" style="left:243px;top:134px;width:3px;height:222px;background:#000"></div>
  <div class="abs" style="left:1467px;top:134px;width:3px;height:224px;background:#000"></div>
  <div class="abs" style="left:108px;top:355px;width:138px;height:3px;background:#000"></div>
  <div class="abs" style="left:245px;top:355px;width:983px;height:1.100px;background:#000"></div>
  <div class="abs" style="left:1227px;top:355px;width:243px;height:3px;background:#000"></div>
  <div class="abs" style="left:243px;top:356px;width:2px;height:434px;background:#000"></div>
  <div class="abs" style="left:1227px;top:355px;width:3.500px;height:435.500px;background:#000"></div>
  <div class="abs" style="left:1465px;top:355px;width:5px;height:435.500px;background:#000"></div>
  <div class="abs" style="left:108px;top:787.500px;width:137px;height:3px;background:#000"></div>
  <div class="abs" style="left:245px;top:788.500px;width:983px;height:2px;background:#000"></div>
  <div class="abs" style="left:1227px;top:787px;width:243px;height:3.500px;background:#000"></div>
  <!-- left column text -->
  <div class="art lt" style="left:262px;top:396px">
    <div class="l"><span class="fitls" style="--lw:438.6px;letter-spacing:0.747px">古代日本語 - やまとことば - には「自然」を表す語がありません。</span></div>
    <div class="l"><span class="fitls" style="--lw:439px;letter-spacing:0.539px">遥かむかし、自然はカミと一体であり、その関係は曖昧過ぎて、「自</span></div>
    <div class="l"><span class="fitls" style="--lw:276px;letter-spacing:0.694px">然」を区別する語は生まれませんでした…</span></div>
  </div>
  <div class="art lt" style="left:262px;top:477px">
    <div class="l"><span class="fitls" style="--lw:428.5px;letter-spacing:0.666px">おなじように、現代を生きるわたしたちが日常生活の中で、「自然</span></div>
    <div class="l"><span class="fitls" style="--lw:434.7px;letter-spacing:0.613px">信仰」を自覚することは多くありません。しかし、大きな木を見て</span></div>
    <div class="l"><span class="fitls" style="--lw:434px;letter-spacing:0.594px">何かの力を感じたり、山の間からのぼる太陽をみて大いなるものの</span></div>
    <div class="l"><span class="fitls" style="--lw:434.7px;letter-spacing:0.543px">存在を感じたことはありませんか。こうした場面は日常の 1 ページ</span></div>
    <div class="l"><span class="fitls" style="--lw:289.7px;letter-spacing:0.684px">に埋もれて在るのが「自然信仰」なのです。</span></div>
  </div>
  <div class="art lt" style="left:262px;top:616px">
    <div class="l"><span class="fitls" style="--lw:437px;letter-spacing:0.690px">舞台となる狸谷山不動院は、森林伽藍と呼ばれる伽藍配置を持ち、</span></div>
    <div class="l"><span class="fitls" style="--lw:434.7px;letter-spacing:0.659px">洞窟と一体化した不動明王を本尊とする自然豊かなお寺です。そん</span></div>
    <div class="l"><span class="fitls" style="--lw:421.8px;letter-spacing:0.726px">な森のなかには何かが住んでいそうな場所がたくさんあります。</span></div>
  </div>
  <div class="art lt" style="left:262px;top:698px">
    <div class="l"><span class="fitls" style="--lw:246.2px;letter-spacing:0.591px">今夜、身近すぎる自然信仰に灯りを…</span></div>
    <div class="l"><span class="fitls" style="--lw:218.2px;letter-spacing:0.692px">森のみなさま、おじゃまします！</span></div>
  </div>
  <!-- middle column -->
  <div class="art" style="left:737px;top:382px;font-size:17px;white-space:nowrap;width:444px;text-align-last:justify">灯しの森 - 夜の狸谷山不動院、日本文化にあかりを灯す -</div>
  <div class="art" style="left:737px;top:417px;font-size:15.500px;white-space:nowrap;width:367px;text-align-last:justify">開催期間 : 令和 4 年 3 月 16 日 - 令和 4 年 3 月 20 日</div>
  <div class="art" style="left:737px;top:442.500px;font-size:15.500px;white-space:nowrap;width:157px;text-align-last:justify">開催時間 :18:00-21:00</div>
  <div class="art" style="left:737px;top:468.500px;font-size:15.500px;white-space:nowrap">主催:</div>
  <div class="art fit" style="left:785px;top:468.500px;font-size:15.500px;white-space:nowrap;--tw:142px;transform:scaleX(0.9526);transform-origin:0 50%">Good Samaritan Club</div>
  <div class="art" style="left:976px;top:468.500px;font-size:15.500px;white-space:nowrap">共催:</div>
  <div class="art" style="left:1024px;top:468.500px;font-size:15.500px;white-space:nowrap;width:94px;text-align-last:justify">狸谷山不動院</div>
  <div class="art" style="left:778.500px;top:488px;font-size:8px;white-space:nowrap;width:158px;text-align-last:justify;color:#2a2a2a">（京都大学生ボランティアガイド団体）</div>
  <div class="abs" style="left:736px;top:507px;width:419px;height:1.500px;background:#646464"></div>
  <div class="art bl" style="left:760px;top:525.500px">
    <div>・本券は一人一回限り有効です。</div>
    <div>・本券の払い戻し、再発行はいたしません。</div>
    <div>・本券は「灯しの森」終了後も狸谷山不動院拝観券として利用できます。</div>
    <div>・狸谷山不動院の通常拝観時間は 10:00-15:00 です。</div>
    <div>・手持ち灯篭はお帰りの際に自動車祈祷殿にて返却ください。</div>
    <div>・本堂内を除き写真撮影可能です。</div>
    <div>・全エリアにおいて禁煙です。火災防止のためご協力お願いします。</div>
    <div>・危険ですので公開エリア以外へは立ち入らないでください。</div>
    <div>・最終シャトルバスは 21:00 発ですのでご注意ください。</div>
    <div>・その他スタッフの指示にしたがってください。</div>
  </div>
  <!-- sponsor -->
  <div class="art" style="left:1237px;top:521px;font-size:35px;line-height:61.500px;font-weight:300;white-space:nowrap;color:#000">スポンサーエ<br>リア</div>
</div></div>
<!-- ===== STATUS BAR ===== -->
<div id="status"></div>
<div id="statusin" class="abs" style="left:0;top:1009px;width:1555px;height:21px;overflow:hidden">
  <div class="abs" style="left:92px;top:0;width:1463px;height:21px;background:#535353"></div>
  <div class="abs" style="left:92px;top:0;width:16px;height:1px;background:#373737"></div>
  <!-- zoom -->
  <div class="abs" style="left:98px;top:2px;width:62px;height:22px;background:#4a4a4a"></div>
  <div class="abs" style="left:161px;top:2px;width:21px;height:22px;background:#4c4c4c"></div>
  <div class="t" style="left:101px;top:7px;font-size:15px;color:#f2f2f2">126.81%</div>
  <svg class="abs" style="left:165px;top:10px" width="12" height="8" viewBox="0 0 12 8"><path d="M1.500 1.500 L6 6 L10.500 1.500" fill="none" stroke="#ececec" stroke-width="1.800"/></svg>
  <!-- rotate -->
  <div class="abs" style="left:189px;top:2px;width:61px;height:22px;background:#4a4a4a"></div>
  <div class="abs" style="left:251px;top:2px;width:21px;height:22px;background:#4c4c4c"></div>
  <div class="t" style="left:192px;top:7px;font-size:15px;color:#f2f2f2">0°</div>
  <svg class="abs" style="left:255px;top:10px" width="12" height="8" viewBox="0 0 12 8"><path d="M1.500 1.500 L6 6 L10.500 1.500" fill="none" stroke="#ececec" stroke-width="1.800"/></svg>
  <!-- nav -->
  <svg class="abs" style="left:285px;top:7px" width="13" height="12" viewBox="0 0 13 12"><rect x="0" y="0" width="2.500" height="12" fill="#6c6c6c"/><path d="M12 0 L4 6 L12 12 Z" fill="#6c6c6c"/></svg>
  <svg class="abs" style="left:307px;top:7px" width="9" height="12" viewBox="0 0 9 12"><path d="M8.500 0 L.5 6 L8.500 12 Z" fill="#6c6c6c"/></svg>
  <div class="abs" style="left:327px;top:2px;width:48px;height:22px;background:#4a4a4a"></div>
  <div class="abs" style="left:376px;top:2px;width:21px;height:22px;background:#4c4c4c"></div>
  <div class="t" style="left:330px;top:8px;font-size:15px;color:#f2f2f2">1</div>
  <svg class="abs" style="left:380px;top:10px" width="12" height="8" viewBox="0 0 12 8"><path d="M1.500 1.500 L6 6 L10.500 1.500" fill="none" stroke="#ececec" stroke-width="1.800"/></svg>
  <svg class="abs" style="left:410px;top:7px" width="9" height="12" viewBox="0 0 9 12"><path d="M.5 0 L8.500 6 L.5 12 Z" fill="#d8d8d8"/></svg>
  <svg class="abs" style="left:428px;top:7px" width="13" height="12" viewBox="0 0 13 12"><rect x="10.500" y="0" width="2.500" height="12" fill="#d8d8d8"/><path d="M1 0 L9 6 L1 12 Z" fill="#d8d8d8"/></svg>
  <div class="t" style="left:563px;top:7px;font-size:13px;color:#d6d6d6">選択</div>
  <svg class="abs" style="left:709px;top:7px" width="9" height="12" viewBox="0 0 9 12"><path d="M.5 0 L8.500 6 L.5 12 Z" fill="#d8d8d8"/></svg>
  <!-- hscroll -->
  <div class="abs" style="left:724px;top:1px;width:809px;height:20px;background:#4b4b4b"></div>
  <svg class="abs" style="left:729px;top:3px" width="8" height="13" viewBox="0 0 8 13"><path d="M6.500 1.500 L1.500 6.500 L6.500 11.500" fill="none" stroke="#bdbdbd" stroke-width="1.600"/></svg>
  <svg class="abs" style="left:1518px;top:3px" width="8" height="13" viewBox="0 0 8 13"><path d="M1.500 1.500 L6.500 6.500 L1.500 11.500" fill="none" stroke="#bdbdbd" stroke-width="1.600"/></svg>
  <div class="abs" style="left:1120px;top:2px;width:32px;height:17px;border-radius:8.500px;background:#626262"></div>
  <div class="abs" style="left:1533px;top:1px;width:21px;height:20px;background:#4f4f4f"></div>
</div>
<!-- ===== RIGHT PANEL ===== -->
<div class="abs" style="left:1553px;top:82px;width:367px;height:948px;background:#454545"></div>
<div id="rpanel">
  <!-- header band -->
  <div class="abs" style="left:0;top:0;width:365px;height:14px;background:#4c4c4c"></div>
  <div class="abs" style="left:0;top:14px;width:365px;height:1px;background:#3c3c3c"></div>
  <div class="abs" style="left:-2px;top:0;width:2px;height:948px;background:#3a3a3a"></div>
  <svg class="abs" style="left:297px;top:3px" width="10" height="8" viewBox="0 0 10 8"><path d="M1 .8 L3.800 4 L1 7.200 Z M5.500 .8 L8.300 4 L5.500 7.200 Z" fill="#d8d8d8"/></svg>
  <svg class="abs" style="left:347px;top:3px" width="10" height="8" viewBox="0 0 10 8"><path d="M4 .8 L1.200 4 L4 7.200 Z M8.500 .8 L5.700 4 L8.500 7.200 Z" fill="#d8d8d8"/></svg>
  <!-- tabs -->
  <div class="abs" style="left:0;top:15px;width:314px;height:34px;background:#424242"></div>
  <div class="abs" style="left:0;top:15px;width:264px;height:34px;background:#484848"></div>
  <div class="abs" style="left:50px;top:15px;width:75px;height:34px;background:#535353"></div>
  <div class="t p fit" style="left:12px;top:24px;font-size:15px;color:#b9b9b9;font-weight:300;--tw:33px;transform:scaleX(0.8221);transform-origin:0 50%">レイヤ</div>
  <div class="t p fit" style="left:59px;top:24px;font-size:15px;color:#f4f4f4;font-weight:300;--tw:54px;transform:scaleX(0.8077);transform-origin:0 50%">プロパティ</div>
  <div class="t p fit" style="left:136px;top:24px;font-size:15px;color:#b9b9b9;font-weight:300;--tw:36px;transform:scaleX(0.9275);transform-origin:0 50%">CC ラ</div>
  <div class="t" style="left:184px;top:24px;font-size:15px;color:#b9b9b9;font-weight:300">線</div>
  <div class="t" style="left:224px;top:24px;font-size:15px;color:#b9b9b9;font-weight:300">透明</div>
  <div class="abs" style="left:125px;top:16px;width:1px;height:33px;background:#3c3c3c"></div>
  <div class="abs" style="left:172px;top:16px;width:1px;height:33px;background:#3c3c3c"></div>
  <div class="abs" style="left:212px;top:16px;width:1px;height:33px;background:#3c3c3c"></div>
  <div class="abs" style="left:264px;top:16px;width:1px;height:33px;background:#3c3c3c"></div>
  <!-- body -->
  <div class="sec" style="top:62px">選択なし</div>
  <div class="hr1" style="top:90px"></div>
  <div class="sec" style="top:108px">ドキュメント</div>
  <div class="t" style="left:60px;top:144px;font-size:14.800px;color:#e2e2e2">単位 :</div>
  <div class="abs" style="left:110px;top:140px;width:155px;height:24px;background:#444;border:1px solid #5a5a5a;border-radius:3px"></div>
  <div class="t" style="left:117px;top:144px;font-size:14.800px;color:#f4f4f4">ポイント</div>
  <svg class="abs" style="left:246px;top:148px" width="12" height="8" viewBox="0 0 12 8"><path d="M1.500 1.500 L6 6 L10.500 1.500" fill="none" stroke="#ececec" stroke-width="1.800"/></svg>
  <div class="t" style="left:1px;top:181px;font-size:14.800px;color:#e2e2e2">アートボード :</div>
  <div class="abs" style="left:110px;top:177px;width:92px;height:25px;background:#4c4c4c;border-radius:3px"></div>
  <div class="abs" style="left:111px;top:178px;width:69px;height:23px;background:#444"></div>
  <div class="t" style="left:115px;top:182px;font-size:15px;color:#f4f4f4">1</div>
  <svg class="abs" style="left:184px;top:185px" width="12" height="8" viewBox="0 0 12 8"><path d="M1.500 1.500 L6 6 L10.500 1.500" fill="none" stroke="#ececec" stroke-width="1.800"/></svg>
  <svg class="abs" style="left:217px;top:183px" width="8" height="12" viewBox="0 0 8 12"><path d="M7 1 L1.500 6 L7 11 Z" fill="#6c6c6c"/></svg>
  <svg class="abs" style="left:245px;top:183px" width="8" height="12" viewBox="0 0 8 12"><path d="M1 1 L6.500 6 L1 11 Z" fill="#d8d8d8"/></svg>
  <div class="btn" style="left:109px;top:211px;width:167px;height:26px;font-size:14.800px;line-height:24px">アートボードを編集</div>
  <div class="hr1" style="top:256px"></div>
  <div class="sec" style="top:271px">定規とグリッド</div>
  <!-- ruler/grid icons -->
  <div class="abs" style="left:126px;top:265px;width:27px;height:27px;background:#2e2e2e;border-radius:2px"></div>
  <svg class="abs" style="left:129px;top:268px" width="22" height="22" viewBox="0 0 22 22"><path d="M1 1 H21 V7 H7 V21 H1 Z" fill="#f0f0f0"/><g fill="#2e2e2e"><rect x="9" y="4" width="1.200" height="3"/><rect x="12" y="4" width="1.200" height="3"/><rect x="15" y="4" width="1.200" height="3"/><rect x="18" y="4" width="1.200" height="3"/><rect x="4" y="9" width="3" height="1.200"/><rect x="4" y="12" width="3" height="1.200"/><rect x="4" y="15" width="3" height="1.200"/><rect x="4" y="18" width="3" height="1.200"/></g></svg>
  <svg class="abs" style="left:166px;top:268px" width="22" height="22" viewBox="0 0 22 22"><rect x="1" y="1" width="20" height="20" fill="none" stroke="#d0d0d0" stroke-width="1.600"/><path d="M7.700 1 V21 M14.300 1 V21 M1 7.700 H21 M1 14.300 H21" stroke="#d0d0d0" stroke-width="1.400"/></svg>
  <svg class="abs" style="left:204px;top:268px" width="22" height="22" viewBox="0 0 22 22"><rect x="1" y="1" width="20" height="20" fill="#777" stroke="#c8c8c8" stroke-width="1.600"/><g fill="#a8a8a8"><rect x="2" y="2" width="4.500" height="4.500"/><rect x="11" y="2" width="4.500" height="4.500"/><rect x="6.500" y="6.500" width="4.500" height="4.500"/><rect x="15.500" y="6.500" width="4.500" height="4.500"/><rect x="2" y="11" width="4.500" height="4.500"/><rect x="11" y="11" width="4.500" height="4.500"/><rect x="6.500" y="15.500" width="4.500" height="4.500"/><rect x="15.500" y="15.500" width="4.500" height="4.500"/></g></svg>
  <div class="hr1" style="top:302px"></div>
  <div class="sec" style="top:318px">ガイド</div>
  <div class="abs" style="left:121px;top:313px;width:27px;height:27px;background:#2e2e2e;border-radius:2px"></div>
  <svg class="abs" style="left:124px;top:316px" width="22" height="22" viewBox="0 0 22 22"><path d="M6.500 0 V22 M11.500 0 V22 M0 7.500 H22 M0 15.500 H22" stroke="#f4f4f4" stroke-width="1.700"/></svg>
  <svg class="abs" style="left:161px;top:316px" width="24" height="23" viewBox="0 0 24 23"><path d="M6 0 V20 M11 0 V12 M0 6.500 H20 M0 13.500 H11" stroke="#c4c4c4" stroke-width="1.500"/><rect x="12.500" y="14.500" width="9.500" height="7.500" fill="#c4c4c4"/><path d="M14.500 14.500 V12.500 a2.800 2.800 0 0 1 5.600 0 V14.500" fill="none" stroke="#c4c4c4" stroke-width="1.500"/></svg>
  <div class="abs" style="left:196px;top:313px;width:27px;height:27px;background:#2e2e2e;border-radius:2px"></div>
  <svg class="abs" style="left:199px;top:316px" width="23" height="22" viewBox="0 0 23 22"><path d="M6.500 0 V22 M0 7.500 H22" stroke="#f4f4f4" stroke-width="1.700"/><path d="M12 3 L7.500 7.500 L12 12" fill="none" stroke="#f4f4f4" stroke-width="1.500"/><path d="M18 9 L13 16 H16.500 L15 22 L21.500 13.500 H17.500 L19.500 9 Z" fill="#f4f4f4"/></svg>
  <div class="hr1" style="top:350px"></div>
  <div class="sec" style="top:365px">スナップオプション</div>
  <div class="abs" style="left:157px;top:360px;width:27px;height:28px;background:#2e2e2e;border-radius:2px"></div>
  <svg class="abs" style="left:160px;top:362px" width="22" height="24" viewBox="0 0 22 24"><path d="M4.500 1 V23" stroke="#f4f4f4" stroke-width="1.500"/><circle cx="4.500" cy="12" r="2" fill="#2e2e2e" stroke="#f4f4f4" stroke-width="1.300"/><path d="M9.500 9.200 H15 a2.800 2.800 0 0 1 0 5.600 H9.500" fill="none" stroke="#f4f4f4" stroke-width="3"/></svg>
  <svg class="abs" style="left:195px;top:362px" width="24" height="24" viewBox="0 0 24 24"><g fill="#c4c4c4"><rect x="1" y="1" width="7" height="22" rx="1"/></g><path d="M1 5 H8 M1 9 H8 M1 13 H8 M1 17 H8 M4.500 1 V23" stroke="#535353" stroke-width="1"/><path d="M11 9.200 H16.500 a2.800 2.800 0 0 1 0 5.600 H11" fill="none" stroke="#c4c4c4" stroke-width="3"/></svg>
  <svg class="abs" style="left:233px;top:362px" width="24" height="24" viewBox="0 0 24 24"><g fill="#c4c4c4"><rect x="1" y="2" width="6" height="6" rx="1"/><rect x="1" y="9" width="6" height="6" rx="1"/><rect x="1" y="16" width="6" height="6" rx="1"/></g><path d="M10 9.200 H15.500 a2.800 2.800 0 0 1 0 5.600 H10" fill="none" stroke="#c4c4c4" stroke-width="3"/></svg>
  <div class="hr1" style="top:398px"></div>
  <div class="sec" style="top:414px">環境設定</div>
  <div class="sec" style="top:451px">キー入力 :</div>
  <div class="abs" style="left:93px;top:444px;width:74px;height:25px;background:#444;border:1px solid #5a5a5a;border-radius:3px"></div>
  <div class="t" style="left:99px;top:449px;font-size:15px;color:#f4f4f4">1 pt</div>
  <div class="abs" style="left:17px;top:489px;width:15px;height:15px;border:1.500px solid #c8c8c8;border-radius:2px"></div>
  <div class="t" style="left:35px;top:489px;font-size:14.800px;color:#e2e2e2">プレビュー境界を使用</div>
  <div class="abs" style="left:17px;top:519px;width:15px;height:15px;border:1.500px solid #c8c8c8;border-radius:2px"></div>
  <div class="t" style="left:35px;top:519px;font-size:14.800px;color:#e2e2e2">角を拡大・縮小</div>
  <div class="abs" style="left:17px;top:549px;width:15px;height:15px;border:1.500px solid #c8c8c8;border-radius:2px"></div>
  <div class="t" style="left:35px;top:549px;font-size:14.800px;color:#e2e2e2">線幅と効果を拡大・縮小</div>
  <div class="hr1" style="top:583px"></div>
  <div class="sec" style="top:607px">クイック操作</div>
  <div class="btn" style="left:13px;top:639px;width:284px;height:26px;font-size:14.800px;line-height:24px">ドキュメント設定</div>
  <div class="btn" style="left:13px;top:678px;width:284px;height:26px;font-size:14.800px;line-height:24px">環境設定</div>
</div>
<!-- right strip -->
<div class="abs" style="left:1872px;top:97px;width:48px;height:85px;background:#535353"></div>
<div class="abs" style="left:1872px;top:184px;width:48px;height:846px;background:#505050"></div>
<div class="abs" style="left:1884px;top:100px;width:27px;height:5px;background:repeating-linear-gradient(90deg,#3c3c3c 0 1px,transparent 1px 3px)"></div>
<svg class="abs" style="left:1883px;top:114px" width="26" height="25" viewBox="0 0 26 25"><rect x="2" y="2" width="13" height="15" fill="none" stroke="#d4d4d4" stroke-width="1.500"/><rect x="8" y="10" width="16" height="13" fill="#535353" stroke="#d4d4d4" stroke-width="1.500"/></svg>
<svg class="abs" style="left:1885px;top:148px" width="26" height="26" viewBox="0 0 26 26"><path d="M11 6 H2.500 V23.500 H20 V15" fill="none" stroke="#d4d4d4" stroke-width="2.400"/><path d="M12 14 L22 4" stroke="#d4d4d4" stroke-width="2.200"/><path d="M14.500 2.500 H23.500 V11.500" fill="none" stroke="#d4d4d4" stroke-width="2.400"/></svg>
<!-- ===== TASKBAR ===== -->
<div id="taskbar">
  <div class="abs" style="left:745px;top:0;width:60px;height:50px;background:rgba(255,255,255,.45)"></div>
  <!-- running indicators -->
  <div class="run" style="left:129px;width:51px"><i></i></div>
  <div class="run" style="left:191px;width:51px"><i></i></div>
  <div class="run" style="left:253px;width:51px"><i></i></div>
  <div class="run" style="left:315px;width:51px"></div>
  <div class="run" style="left:688px;width:50px"></div>
  <div class="run" style="left:745px;width:60px"></div>
  <div class="run" style="left:811px;width:51px"></div>
  <div class="run" style="left:873px;width:51px"></div>
  <div class="run" style="left:935px;width:51px"></div>
  <div class="run" style="left:997px;width:51px"></div>
  <!-- windows -->
  <svg class="abs" style="left:19px;top:15px" width="21" height="21" viewBox="0 0 21 21"><path d="M0 3 L9 1.800 V9.800 H0 Z M10.500 1.600 L21 0 V9.800 H10.500 Z M0 11.200 H9 V19.200 L0 18 Z M10.500 11.200 H21 V21 L10.500 19.400 Z" fill="#0a0a0a"/></svg>
  <!-- task view -->
  <svg class="abs" style="left:79px;top:13px" width="24" height="24" viewBox="0 0 24 24"><path d="M1 1.500 H15 M1 22.500 H15 M1 1.500 V5 M15 1.500 V5 M1 22.500 V19 M15 22.500 V19" stroke="#111" stroke-width="1.600" fill="none"/><rect x="2.500" y="7.500" width="11" height="9" fill="none" stroke="#111" stroke-width="1.700"/><path d="M20.500 1 V23" stroke="#111" stroke-width="1.600"/><rect x="19" y="8" width="3" height="3.500" fill="#111"/></svg>
  <!-- excel -->
  <svg class="abs" style="left:139px;top:11px" width="30" height="29" viewBox="0 0 30 29"><rect x="7" y="0" width="23" height="29" rx="2" fill="#21a366"/><rect x="7" y="0" width="11.500" height="7.300" fill="#21a366"/><rect x="18.500" y="0" width="11.500" height="7.300" rx="1" fill="#33c481"/><rect x="7" y="7.300" width="11.500" height="7.300" fill="#107c41"/><rect x="18.500" y="7.300" width="11.500" height="7.300" fill="#21a366"/><rect x="7" y="14.600" width="11.500" height="7.300" fill="#185c37"/><rect x="18.500" y="14.600" width="11.500" height="7.300" fill="#107c41"/><rect x="7" y="21.900" width="23" height="7.100" rx="1" fill="#185c37"/><rect x="0" y="6" width="16" height="17" rx="1.500" fill="#107c41"/><text x="8" y="19.500" font-size="12" font-weight="bold" fill="#fff" text-anchor="middle" font-family="Liberation Sans, sans-serif">X</text></svg>
  <!-- powerpoint -->
  <svg class="abs" style="left:200px;top:10px" width="31" height="30" viewBox="0 0 31 30"><circle cx="17" cy="15" r="14" fill="#ed6c47"/><path d="M17 1 A14 14 0 0 1 31 15 H17 Z" fill="#ff8f6b"/><path d="M3 15 H31 A14 14 0 0 1 3 15 Z" fill="#d35230"/><rect x="0" y="6.500" width="16" height="17" rx="1.500" fill="#c43e1c"/><text x="8" y="19.500" font-size="12" font-weight="bold" fill="#fff" text-anchor="middle" font-family="Liberation Sans, sans-serif">P</text></svg>
  <!-- word -->
  <svg class="abs" style="left:263px;top:11px" width="30" height="29" viewBox="0 0 30 29"><rect x="7" y="0" width="23" height="7.300" rx="1.500" fill="#41a5ee"/><rect x="7" y="7.300" width="23" height="7.300" fill="#2b7cd3"/><rect x="7" y="14.600" width="23" height="7.300" fill="#185abd"/><rect x="7" y="21.900" width="23" height="7.100" rx="1.500" fill="#103f91"/><rect x="0" y="6" width="16" height="17" rx="1.500" fill="#185abd"/><text x="8" y="19.500" font-size="11.500" font-weight="bold" fill="#fff" text-anchor="middle" font-family="Liberation Sans, sans-serif">W</text></svg>
  <!-- explorer -->
  <svg class="abs" style="left:325px;top:12px" width="30" height="27" viewBox="0 0 30 27"><path d="M1 2.500 a1.500 1.500 0 0 1 1.500 -1.500 H11 l2.500 3 H1 Z" fill="#e0a82e"/><rect x="1" y="3.500" width="28" height="21" rx="1.500" fill="#f7d36b"/><rect x="1" y="3.500" width="28" height="4" fill="#fbe08a"/><path d="M7.500 26 V16.500 H22.500 V26 H19 V20 H11 V26 Z" fill="#3d8fd1"/><rect x="7.500" y="14.500" width="15" height="3" fill="#59a9e4"/></svg>
  <!-- mail -->
  <svg class="abs" style="left:386px;top:11px" width="50" height="34" viewBox="0 0 50 34"><path d="M1 11 L15.500 1 L30 11 V28 H1 Z" fill="#1b6fbb"/><path d="M4 9 H27 V22 H4 Z" fill="#e8f2fb"/><path d="M1 11 L15.500 21 L30 11 V28 H1 Z" fill="#2f9be6"/><path d="M1 28 L15.500 17.500 L30 28 Z" fill="#1f82d1"/><rect x="11.500" y="13.500" width="36" height="19" rx="9.500" fill="#d9dde0" stroke="#444" stroke-width="1"/><text x="29.500" y="28.500" font-size="14.500" fill="#111" text-anchor="middle" font-family="Liberation Sans, sans-serif">99+</text></svg>
  <!-- rhino -->
  <svg class="abs" style="left:449px;top:10px" width="31" height="31" viewBox="0 0 31 31"><rect width="31" height="31" fill="#0a0a0a"/><path d="M0 13 L4 9 L6.500 0 H9.500 L8.500 8 L12 12 L17 9 L19 13 L25 14 L27 11 L29.500 13 L30 23 L25 28 L19 26 L14 22 L9 24 L0 24 Z" fill="#fff"/><path d="M7 14 L13 13 L16 16 L12 19 L8 18 Z M16 19 L21 17 L24 20 L20 22 Z M4 19 L7 20 L6 22 Z" fill="#0a0a0a"/><text x="25" y="11.500" font-size="12.500" fill="#fff" text-anchor="middle" font-family="Liberation Sans, sans-serif" font-style="italic">7</text></svg>
  <!-- zoom -->
  <svg class="abs" style="left:511px;top:11px" width="29" height="29" viewBox="0 0 29 29"><rect width="29" height="29" rx="8" fill="#4a8cff"/><rect x="5" y="9.500" width="13" height="10" rx="2.500" fill="#fff"/><path d="M19 13 L24 9.800 V19.200 L19 16 Z" fill="#fff"/></svg>
  <!-- paint -->
  <svg class="abs" style="left:572px;top:10px" width="32" height="31" viewBox="0 0 32 31"><ellipse cx="14" cy="18" rx="13" ry="10.500" fill="#d8dde6" stroke="#9aa3b4" stroke-width="1"/><ellipse cx="19" cy="23" rx="3.500" ry="2.500" fill="#dbe8ee"/><circle cx="7" cy="17" r="2.300" fill="#d9453d"/><circle cx="11" cy="11.500" r="2.300" fill="#efb73e"/><circle cx="17.500" cy="10.500" r="2.300" fill="#58a846"/><circle cx="8.500" cy="22.500" r="2.200" fill="#3b78c8"/><path d="M27 1 L30 3 L19 22 L16 24 L16.500 20.500 Z" fill="#c98a4b"/><path d="M27 1 L30 3 L27.500 7 L24.500 5 Z" fill="#e6c27a"/></svg>
  <!-- teamviewer -->
  <svg class="abs" style="left:634px;top:10px" width="31" height="31" viewBox="0 0 31 31"><rect width="31" height="31" rx="1" fill="#1a72c4"/><circle cx="15.500" cy="15.500" r="12" fill="#fff"/><path d="M3.500 15.500 L11 10.500 V13.800 H20 V10.500 L27.500 15.500 L20 20.500 V17.200 H11 V20.500 Z" fill="#1a72c4"/></svg>
  <!-- edge -->
  <svg class="abs" style="left:696px;top:10px" width="31" height="31" viewBox="0 0 31 31"><defs><linearGradient id="eg1" x1="0" y1="0" x2="1" y2="1"><stop offset="0" stop-color="#35c1f1"/><stop offset=".5" stop-color="#2aa6d8"/><stop offset="1" stop-color="#1a5fb4"/></linearGradient><linearGradient id="eg2" x1="0" y1="0" x2="1" y2="0"><stop offset="0" stop-color="#2ca4dc"/><stop offset="1" stop-color="#66d14e"/></linearGradient></defs><circle cx="15.500" cy="15.500" r="15" fill="url(#eg1)"/><path d="M1 13 C3 3 14 -1 22 2.500 C28 5 31 11 30.500 15 C30 19 26 20.500 22 20 C24 16 20 11.500 14 12 C8 12.500 5 17 6.500 22 C2 19 0.500 16 1 13 Z" fill="url(#eg2)"/><path d="M12 17 C11 21 14 26 20 26.500 C24 26.800 27 25 29 22.500 C26 29 18 32 12 29.500 C6 27 4.500 21 6.500 17.500 C8 14.500 12 13.500 14.500 14.500 C13 15 12.300 16 12 17 Z" fill="#1556a8"/></svg>
  <!-- illustrator -->
  <svg class="abs" style="left:759px;top:11px" width="29" height="28" viewBox="0 0 29 28"><rect width="29" height="28" rx="5" fill="#330000"/><text x="14.500" y="20.500" font-size="17" font-weight="bold" fill="#ff9a00" text-anchor="middle" font-family="Liberation Sans, sans-serif">Ai</text></svg>
  <!-- chrome with profile -->
  <svg class="abs" style="left:821px;top:10px" width="34" height="34" viewBox="0 0 34 34"><circle cx="15" cy="15" r="14" fill="#fff"/><path d="M15 1 A14 14 0 0 1 27.100 8 H15 A7 7 0 0 0 8.900 11.500 L2.900 8 A14 14 0 0 1 15 1 Z" fill="#db4437"/><path d="M27.100 8 A14 14 0 0 1 15 29 L21 18.500 A7 7 0 0 0 21 11.500 Z" fill="#f4c20d"/><path d="M2.900 8 L8.900 18.500 A7 7 0 0 0 15 22 L15 29 A14 14 0 0 1 2.900 8 Z" fill="#0f9d58"/><circle cx="15" cy="15" r="5.500" fill="#4285f4" stroke="#fff" stroke-width="1.500"/><circle cx="23" cy="23" r="10" fill="#f4f4f4" stroke="#ddd" stroke-width=".6"/><path d="M23 14.500 L24.800 31 H21.200 Z" fill="#c8201c"/></svg>
  <!-- line -->
  <svg class="abs" style="left:883px;top:10px" width="31" height="31" viewBox="0 0 31 31"><rect width="31" height="31" rx="6" fill="#1fb82c"/><path d="M15.500 5 C22 5 27 9 27 14 C27 19 21 23 17 25.500 C15.500 26.500 15 26 15.200 24.500 L15.400 22.900 C9 22.500 4 19 4 14 C4 9 9 5 15.500 5 Z" fill="#fff"/><text x="15.500" y="16.500" font-size="6.500" font-weight="bold" fill="#1fb82c" text-anchor="middle" font-family="Liberation Sans, sans-serif">LINE</text></svg>
  <!-- twitter -->
  <svg class="abs" style="left:945px;top:10px" width="30" height="31" viewBox="0 0 30 31"><rect width="30" height="31" fill="#2ea2ee"/><path d="M23 11 c-.6 .3-1.300 .5-2 .6 .7-.4 1.300-1.100 1.500-1.900 -.7 .4-1.400 .7-2.200 .8 a3.400 3.400 0 0 0 -5.900 3.100 c-2.900-.1-5.400-1.500-7.100-3.600 a3.400 3.400 0 0 0 1.100 4.600 c-.6 0-1.100-.2-1.600-.4 0 1.700 1.200 3.100 2.800 3.400 -.5 .1-1 .2-1.500 .1 .4 1.400 1.700 2.400 3.200 2.400 a6.900 6.900 0 0 1 -5.100 1.400 a9.800 9.800 0 0 0 15.100 -8.700 c.7-.5 1.300-1.100 1.700-1.800 Z" fill="#fff"/></svg>
  <!-- chrome 2 -->
  <svg class="abs" style="left:1008px;top:11px" width="32" height="32" viewBox="0 0 32 32"><circle cx="14" cy="14" r="13.500" fill="#fff"/><path d="M14 .5 A13.500 13.500 0 0 1 25.700 7.250 H14 A6.750 6.750 0 0 0 8.150 10.600 L2.300 7.250 A13.500 13.500 0 0 1 14 .5 Z" fill="#db4437"/><path d="M25.700 7.250 A13.500 13.500 0 0 1 14 27.500 L19.850 17.400 A6.750 6.750 0 0 0 19.850 10.600 Z" fill="#f4c20d"/><path d="M2.300 7.250 L8.150 17.400 A6.750 6.750 0 0 0 14 20.750 L14 27.500 A13.500 13.500 0 0 1 2.300 7.250 Z" fill="#0f9d58"/><circle cx="14" cy="14" r="5.300" fill="#4285f4" stroke="#fff" stroke-width="1.500"/><circle cx="22.500" cy="22" r="6.500" fill="#4a5bb8"/><text x="22.500" y="24.500" font-size="6" fill="#fff" text-anchor="middle" font-family="Liberation Sans, Noto Sans CJK JP, sans-serif">ﾉ</text></svg>
  <!-- tray -->
  <svg class="abs" style="left:1445px;top:12px" width="26" height="26" viewBox="0 0 26 26"><defs><linearGradient id="mg" x1="0" y1="0" x2="0" y2="1"><stop offset="0" stop-color="#fbd84a"/><stop offset="1" stop-color="#f2a81d"/></linearGradient></defs><path d="M16.500 1.500 C18.500 6 17.500 11 14 14.500 C10.500 18 6 19 2.500 18 C5 23 11.500 25.500 17.500 23 C23.500 20 26 13 23.500 7.500 C22 4.500 19.500 2.500 16.500 1.500 Z" fill="url(#mg)"/></svg>
  <div class="t" style="left:1483px;top:16px;font-size:17px;color:#111">6°C</div>
  <div class="t" style="left:1521px;top:16px;font-size:17px;color:#111">晴れ</div>
  <svg class="abs" style="left:1579px;top:20px" width="19" height="11" viewBox="0 0 19 11"><path d="M1.500 9.500 L9.500 1.500 L17.500 9.500" fill="none" stroke="#111" stroke-width="1.500"/></svg>
  <svg class="abs" style="left:1618px;top:15px" width="22" height="20" viewBox="0 0 22 20"><path d="M2 17 A15 15 0 0 1 17 2 M6.500 17 A10.500 10.500 0 0 1 17 6.500 M11 17 A6 6 0 0 1 17 11" fill="none" stroke="#222" stroke-width="1.500"/><circle cx="16" cy="16.500" r="1.800" fill="#111"/></svg>
  <svg class="abs" style="left:1655px;top:12px" width="26" height="26" viewBox="0 0 26 26"><path d="M2 6 L20 2.500 V17 L2 20.500 Z" fill="none" stroke="#222" stroke-width="1.500"/><path d="M7 9.500 h5 v-2 l3 3 -3 3 v-2 h-5z M15 14 h-5 v-1.500 l-2.500 2.500 2.500 2.500 V16 h5z" fill="#222" transform="translate(-1,-1) scale(.95)"/><circle cx="19" cy="19.500" r="4.300" fill="#2f78c8"/></svg>
  <div class="t" style="left:1691px;top:16px;font-size:20px;color:#111;font-weight:500">あ</div>
  <svg class="abs" style="left:1729px;top:15px" width="20" height="20" viewBox="0 0 20 20"><rect x=".5" y=".5" width="19" height="19" fill="#fff" stroke="#222" stroke-width="1"/><circle cx="10" cy="10" r="7" fill="#1a1a1a"/><path d="M11 4.500 V11 a2 2 0 0 1 -4 0" fill="none" stroke="#fff" stroke-width="1.400"/></svg>
  <div class="t" style="left:1757px;top:7px;width:100px;text-align:center;font-size:14.800px;color:#111">22:48</div>
  <div class="t" style="left:1757px;top:29px;width:100px;text-align:center;font-size:14.800px;color:#111">2022/03/05</div>
  <svg class="abs" style="left:1868px;top:14px" width="32" height="30" viewBox="0 0 32 30"><path d="M1 1 H21 V17 H8 L4 22 V17 H1 Z" fill="#111"/><path d="M5 5.500 H17 M5 9 H17 M5 12.500 H17" stroke="#e6e1e9" stroke-width="1.300"/><circle cx="21" cy="20" r="8.800" fill="#e8e3ea" stroke="#555" stroke-width="1"/><text x="21" y="25" font-size="13" fill="#111" text-anchor="middle" font-family="Liberation Sans, sans-serif">1</text></svg>
</div>
</body>
</html>
